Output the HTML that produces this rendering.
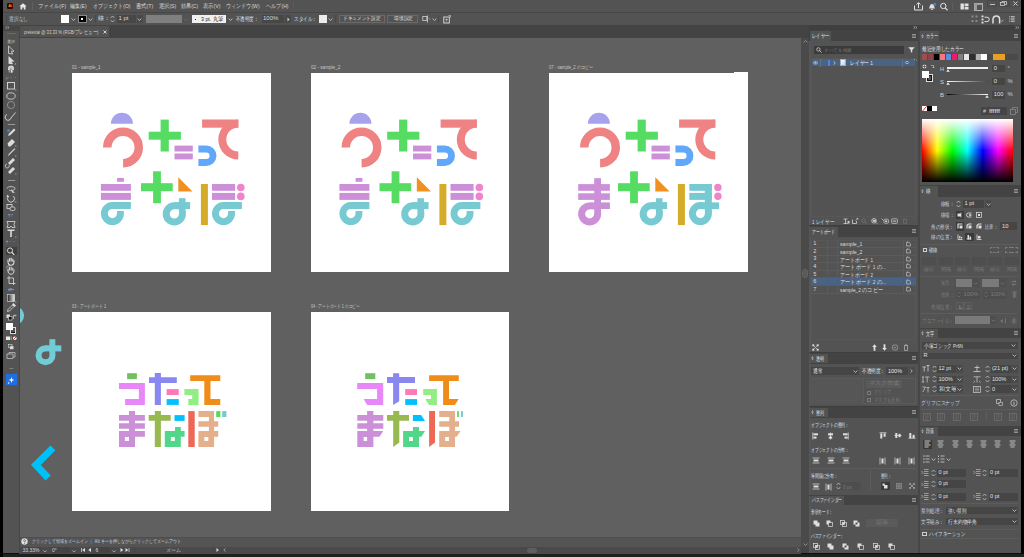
<!DOCTYPE html>
<html><head><meta charset="utf-8">
<style>
*{margin:0;padding:0;box-sizing:border-box}
html,body{width:1024px;height:557px;overflow:hidden;background:#0e0e0e}
body{font-family:"Liberation Sans",sans-serif;color:#d6d6d6;position:relative}
.a{position:absolute}
.t{position:absolute;white-space:nowrap;color:#cfcfcf}
svg.a{overflow:visible}
</style></head><body>

<div class="a" style="left:3px;top:0px;width:1018px;height:12.5px;background:#535353;"></div>
<div class="a" style="left:7px;top:2.8px;width:6.4px;height:6px;background:#330000;border-radius:1.2px"></div>
<div class="t" style="left:7px;top:2.8px;width:6.4px;font-size:4px;line-height:6px;text-align:center;color:#ff9a00;font-weight:bold">Ai</div>
<svg class="a" style="left:18.6px;top:2.8px" width="8" height="7" viewBox="0 0 8 7"><path d="M4,0.2L0.4,3.3H1.5V6.4H3.2V4.6H4.8V6.4H6.5V3.3H7.6Z" fill="#e6e6e6"/></svg>
<div class="a" style="left:31.5px;top:2px;width:0.6px;height:8px;background:#5e5e5e;"></div>
<svg class="a" style="left:38.2px;top:0.50px;overflow:visible" width="28.2" height="9.60"><text x="0" y="6.96" font-size="6" textLength="28.2" lengthAdjust="spacingAndGlyphs" fill="#d8d8d8" font-family="Liberation Sans">ファイル(F)</text></svg>
<svg class="a" style="left:70.4px;top:0.50px;overflow:visible" width="16.6" height="9.60"><text x="0" y="6.96" font-size="6" textLength="16.6" lengthAdjust="spacingAndGlyphs" fill="#d8d8d8" font-family="Liberation Sans">編集(E)</text></svg>
<svg class="a" style="left:93px;top:0.50px;overflow:visible" width="37.5" height="9.60"><text x="0" y="6.96" font-size="6" textLength="37.5" lengthAdjust="spacingAndGlyphs" fill="#d8d8d8" font-family="Liberation Sans">オブジェクト(O)</text></svg>
<svg class="a" style="left:136.1px;top:0.50px;overflow:visible" width="17.3" height="9.60"><text x="0" y="6.96" font-size="6" textLength="17.3" lengthAdjust="spacingAndGlyphs" fill="#d8d8d8" font-family="Liberation Sans">書式(T)</text></svg>
<svg class="a" style="left:158.7px;top:0.50px;overflow:visible" width="17.3" height="9.60"><text x="0" y="6.96" font-size="6" textLength="17.3" lengthAdjust="spacingAndGlyphs" fill="#d8d8d8" font-family="Liberation Sans">選択(S)</text></svg>
<svg class="a" style="left:181px;top:0.50px;overflow:visible" width="17.2" height="9.60"><text x="0" y="6.96" font-size="6" textLength="17.2" lengthAdjust="spacingAndGlyphs" fill="#d8d8d8" font-family="Liberation Sans">効果(C)</text></svg>
<svg class="a" style="left:203.2px;top:0.50px;overflow:visible" width="17.6" height="9.60"><text x="0" y="6.96" font-size="6" textLength="17.6" lengthAdjust="spacingAndGlyphs" fill="#d8d8d8" font-family="Liberation Sans">表示(V)</text></svg>
<svg class="a" style="left:226.4px;top:0.50px;overflow:visible" width="33.6" height="9.60"><text x="0" y="6.96" font-size="6" textLength="33.6" lengthAdjust="spacingAndGlyphs" fill="#d8d8d8" font-family="Liberation Sans">ウィンドウ(W)</text></svg>
<svg class="a" style="left:265.6px;top:0.50px;overflow:visible" width="22.6" height="9.60"><text x="0" y="6.96" font-size="6" textLength="22.6" lengthAdjust="spacingAndGlyphs" fill="#d8d8d8" font-family="Liberation Sans">ヘルプ(H)</text></svg>
<div class="a" style="left:292.5px;top:2px;width:0.6px;height:8px;background:#5a5a5a;"></div>
<svg class="a" style="left:913px;top:1.5px" width="11" height="9" viewBox="0 0 11 9"><path d="M1.5,3.5V8H9.5V3.5" fill="none" stroke="#e0e0e0" stroke-width="1"/><path d="M5.5,6V0.8M3.5,2.6L5.5,0.6L7.5,2.6" fill="none" stroke="#e0e0e0" stroke-width="1"/></svg>
<svg class="a" style="left:926.5px;top:1.5px" width="10" height="9" viewBox="0 0 10 9"><path d="M2,6.5C2.8,5.5 2.5,2 5,2C7.5,2 7.2,5.5 8,6.5Z" fill="#e0e0e0"/><rect x="4.2" y="7" width="1.6" height="1" fill="#e0e0e0"/><circle cx="7.6" cy="2.2" r="1.5" fill="#2d8ceb"/></svg>
<svg class="a" style="left:938.5px;top:1.5px" width="10" height="9" viewBox="0 0 10 9"><circle cx="4.3" cy="4" r="2.7" fill="none" stroke="#e0e0e0" stroke-width="1"/><path d="M6.3,6L8.6,8.3" stroke="#e0e0e0" stroke-width="1.2"/></svg>
<div class="a" style="left:952.3px;top:2px;width:0.6px;height:8px;background:#5e5e5e;"></div>
<svg class="a" style="left:960px;top:3px" width="9" height="7" viewBox="0 0 9 7"><rect x="0.5" y="0.5" width="3.4" height="6" fill="#e0e0e0"/><rect x="4.6" y="0.5" width="3.9" height="2.6" fill="#e0e0e0"/><rect x="4.6" y="3.8" width="3.9" height="2.7" fill="#e0e0e0"/></svg>
<svg class="a" style="left:973.5px;top:2.5px" width="9" height="8" viewBox="0 0 9 8"><rect x="0.5" y="0.5" width="8" height="7" fill="none" stroke="#bdbdbd" stroke-width="0.9"/><rect x="0.5" y="0.5" width="2.5" height="7" fill="#9a9a9a"/><rect x="0.5" y="0.5" width="8" height="1.6" fill="#9a9a9a"/></svg>
<div class="a" style="left:987.2px;top:0px;width:10.3px;height:7.2px;background:#535353;border:0.5px solid #4a4a4a"></div>
<div class="a" style="left:997.5px;top:0px;width:11.9px;height:7.2px;background:#535353;border:0.5px solid #4a4a4a"></div>
<div class="a" style="left:1009.4px;top:0px;width:11.1px;height:7.2px;background:#535353;border:0.5px solid #4a4a4a"></div>
<div class="a" style="left:990px;top:3.6px;width:4.5px;height:0.8px;background:#bdbdbd;"></div>
<svg class="a" style="left:1000px;top:1px" width="7" height="5" viewBox="0 0 7 5"><rect x="0.5" y="1.5" width="4" height="3" fill="none" stroke="#c8c8c8" stroke-width="0.8"/><path d="M2,1.5V0.5H6.5V3.5H4.5" fill="none" stroke="#c8c8c8" stroke-width="0.8"/></svg>
<svg class="a" style="left:1012.5px;top:1px" width="5" height="5" viewBox="0 0 5 5"><path d="M0.5,0.5L4.5,4.5M4.5,0.5L0.5,4.5" stroke="#d0d0d0" stroke-width="0.9"/></svg>
<div class="a" style="left:1020.8px;top:0px;width:3.2px;height:557px;background:#000000;"></div>
<div class="a" style="left:3px;top:12.5px;width:1017.6px;height:12.5px;background:#535353;"></div>
<div class="a" style="left:3px;top:12.1px;width:1017.6px;height:0.8px;background:#474747;"></div>
<div class="a" style="left:5.5px;top:15px;width:0.7px;height:8px;background:#474747;"></div>
<svg class="a" style="left:9px;top:14.20px;overflow:visible" width="19" height="9.60"><text x="0" y="6.96" font-size="6" textLength="19" lengthAdjust="spacingAndGlyphs" fill="#b8c0d0" font-family="Liberation Sans">選択なし</text></svg>
<div class="a" style="left:60.9px;top:15px;width:8.3px;height:8px;background:#ffffff;"></div>
<svg class="a" style="left:71px;top:17.5px" width="5" height="3" viewBox="0 0 5 3"><path d="M0.6,0.6L2.5,2.4L4.4,0.6" fill="none" stroke="#d0d0d0" stroke-width="0.8"/></svg>
<div class="a" style="left:78px;top:14.8px;width:8.6px;height:8.4px;background:#000;border:0.8px solid #8a8a8a"></div>
<div class="a" style="left:81.3px;top:18px;width:2px;height:2px;background:#fff;"></div>
<svg class="a" style="left:88px;top:17.5px" width="5" height="3" viewBox="0 0 5 3"><path d="M0.6,0.6L2.5,2.4L4.4,0.6" fill="none" stroke="#d0d0d0" stroke-width="0.8"/></svg>
<div class="a" style="left:95px;top:15px;width:0.6px;height:8px;background:#474747;"></div>
<div class="t" style="left:98px;top:15.10px;font-size:6px;line-height:7.80px;color:#d8e0f0;">線：</div>
<svg class="a" style="left:110px;top:15px" width="5" height="8" viewBox="0 0 5 8"><path d="M0.8,2.8L2.5,1L4.2,2.8M0.8,5.2L2.5,7L4.2,5.2" fill="none" stroke="#c8c8c8" stroke-width="0.8"/></svg>
<div class="a" style="left:116.8px;top:15px;width:19.1px;height:8px;background:#474747;"></div>
<div class="t" style="left:118.5px;top:15.10px;font-size:6px;line-height:7.80px;color:#d8d8d8;">1 pt</div>
<div class="a" style="left:136.5px;top:15px;width:6.5px;height:8px;background:#4a4a4a;"></div>
<svg class="a" style="left:137.2px;top:17.5px" width="5" height="3" viewBox="0 0 5 3"><path d="M0.6,0.6L2.5,2.4L4.4,0.6" fill="none" stroke="#d0d0d0" stroke-width="0.8"/></svg>
<div class="a" style="left:146px;top:15px;width:35.8px;height:8px;background:#7f7f7f;"></div>
<svg class="a" style="left:183px;top:17.5px" width="5" height="3" viewBox="0 0 5 3"><path d="M0.6,0.6L2.5,2.4L4.4,0.6" fill="none" stroke="#6a6a6a" stroke-width="0.8"/></svg>
<div class="a" style="left:191.7px;top:15px;width:34.3px;height:8px;background:#f0f0f0;"></div>
<div class="a" style="left:195px;top:18.8px;width:1px;height:1px;background:#333;"></div>
<svg class="a" style="left:201.1px;top:14.20px;overflow:visible" width="22.3" height="9.60"><text x="0" y="6.96" font-size="6" textLength="22.3" lengthAdjust="spacingAndGlyphs" fill="#222" font-family="Liberation Sans">3 pt. 丸筆</text></svg>
<svg class="a" style="left:227.5px;top:17.5px" width="5" height="3" viewBox="0 0 5 3"><path d="M0.6,0.6L2.5,2.4L4.4,0.6" fill="none" stroke="#d0d0d0" stroke-width="0.8"/></svg>
<svg class="a" style="left:235.7px;top:14.20px;overflow:visible" width="22.3" height="9.60"><text x="0" y="6.96" font-size="6" textLength="22.3" lengthAdjust="spacingAndGlyphs" fill="#d8e0f0" font-family="Liberation Sans">不透明度：</text></svg>
<div class="a" style="left:261.7px;top:15px;width:22.3px;height:8px;background:#474747;"></div>
<div class="t" style="left:263px;top:15.10px;font-size:6px;line-height:7.80px;color:#d8d8d8;">100%</div>
<div class="a" style="left:285px;top:15px;width:6px;height:8px;background:#4a4a4a;"></div>
<svg class="a" style="left:286.8px;top:16.8px" width="3" height="5" viewBox="0 0 3 5"><path d="M0.5,0.5L2.5,2.5L0.5,4.5Z" fill="#d0d0d0"/></svg>
<svg class="a" style="left:293.5px;top:14.20px;overflow:visible" width="22.5" height="9.60"><text x="0" y="6.96" font-size="6" textLength="22.5" lengthAdjust="spacingAndGlyphs" fill="#d8e0f0" font-family="Liberation Sans">スタイル：</text></svg>
<div class="a" style="left:318.8px;top:15px;width:8.2px;height:8px;background:#ececec;"></div>
<svg class="a" style="left:328.2px;top:17.5px" width="5" height="3" viewBox="0 0 5 3"><path d="M0.6,0.6L2.5,2.4L4.4,0.6" fill="none" stroke="#d0d0d0" stroke-width="0.8"/></svg>
<div class="a" style="left:334.5px;top:15px;width:0.6px;height:8px;background:#474747;"></div>
<div class="a" style="left:339px;top:14.6px;width:45.7px;height:8px;border:1px solid #6a6a6a;border-width:0.7px"></div>
<svg class="a" style="left:343.4px;top:14.44px;overflow:visible" width="37.4" height="8.32"><text x="0" y="6.03" font-size="5.2" textLength="37.4" lengthAdjust="spacingAndGlyphs" fill="#e0e0e0" font-family="Liberation Sans">ドキュメント設定</text></svg>
<div class="a" style="left:387.4px;top:14.6px;width:31.1px;height:8px;border:1px solid #6a6a6a;border-width:0.7px"></div>
<svg class="a" style="left:394px;top:14.44px;overflow:visible" width="19" height="8.32"><text x="0" y="6.03" font-size="5.2" textLength="19" lengthAdjust="spacingAndGlyphs" fill="#e0e0e0" font-family="Liberation Sans">環境設定</text></svg>
<svg class="a" style="left:422px;top:15px" width="9" height="8" viewBox="0 0 9 8"><rect x="0.8" y="1.5" width="4" height="4" fill="none" stroke="#d0d0d0" stroke-width="0.8"/><path d="M5.5,0.5V7.5" stroke="#d0d0d0" stroke-width="0.8"/><path d="M6.5,3L8,4.5" stroke="#d0d0d0" stroke-width="0.6"/></svg>
<svg class="a" style="left:431.5px;top:17.5px" width="5" height="3" viewBox="0 0 5 3"><path d="M0.6,0.6L2.5,2.4L4.4,0.6" fill="none" stroke="#d0d0d0" stroke-width="0.8"/></svg>
<div class="a" style="left:438px;top:15px;width:0.6px;height:8px;background:#474747;"></div>
<svg class="a" style="left:443px;top:14.5px" width="8" height="9" viewBox="0 0 8 9"><rect x="0.8" y="2" width="5.5" height="6" fill="none" stroke="#e0e0e0" stroke-width="0.9"/><path d="M3.6,6.5V3.8M2.4,5L3.6,3.8L4.8,5" fill="none" stroke="#e0e0e0" stroke-width="0.6"/><path d="M5.5,0.5H7.5V2.5" fill="none" stroke="#e0e0e0" stroke-width="0.6"/></svg>
<svg class="a" style="left:971px;top:15px" width="7" height="8" viewBox="0 0 7 8"><g fill="#8a8a8a"><rect x="0.5" y="0.5" width="2" height="2"/><rect x="4.5" y="0.5" width="2" height="2"/><rect x="0.5" y="5" width="2" height="2"/><rect x="4.5" y="5" width="2" height="2"/></g></svg>
<svg class="a" style="left:981px;top:14.5px" width="9" height="9" viewBox="0 0 9 9"><g fill="#e0e0e0"><rect x="0.5" y="0.5" width="2" height="1.8"/><rect x="0.5" y="3.6" width="2" height="1.8"/><rect x="0.5" y="6.7" width="2" height="1.8"/></g><path d="M3.5,2.2H6A2.2,2.2 0 0 1 6,6.6H3.5" fill="none" stroke="#e0e0e0" stroke-width="1"/></svg>
<svg class="a" style="left:991.5px;top:14.5px" width="12" height="9" viewBox="0 0 12 9"><path d="M1,8.5V4.2A3.3,3.3 0 0 1 7.6,4.2V8.5" fill="none" stroke="#e0e0e0" stroke-width="1.5"/><path d="M8.8,5.6L9.8,6.6L11.3,4.8" fill="none" stroke="#d0d0d0" stroke-width="0.7"/></svg>
<svg class="a" style="left:1008.5px;top:16px" width="6" height="6" viewBox="0 0 6 6"><g fill="#d8d8d8"><rect x="0.3" y="0.3" width="1" height="1"/><rect x="0.3" y="2.5" width="1" height="1"/><rect x="0.3" y="4.7" width="1" height="1"/><rect x="2" y="0.3" width="3.7" height="1"/><rect x="2" y="2.5" width="3.7" height="1"/><rect x="2" y="4.7" width="3.7" height="1"/></g></svg>
<div class="a" style="left:3px;top:25px;width:805.5px;height:12.5px;background:#434343;"></div>
<div class="a" style="left:19.7px;top:25.8px;width:89.8px;height:11.7px;background:#535353;"></div>
<svg class="a" style="left:23.5px;top:27.12px;overflow:visible" width="74.5" height="8.96"><text x="0" y="6.50" font-size="5.6" textLength="74.5" lengthAdjust="spacingAndGlyphs" fill="#d0d0d0" font-family="Liberation Sans">pretextai @ 33.33 % (RGB/プレビュー)</text></svg>
<svg class="a" style="left:103.3px;top:29.8px" width="4" height="4" viewBox="0 0 4 4"><path d="M0.5,0.5L3.5,3.5M3.5,0.5L0.5,3.5" stroke="#e0e0e0" stroke-width="0.9"/></svg>
<div class="a" style="left:19.7px;top:37.5px;width:781.7px;height:499.3px;background:#606060;"></div>
<div class="a" style="left:801.4px;top:37.5px;width:7.2px;height:509.5px;background:#4a4a4a;"></div>
<svg class="a" style="left:802.7px;top:39.5px" width="5" height="3" viewBox="0 0 5 3"><path d="M0.6,2.4L2.5,0.6L4.4,2.4" fill="none" stroke="#aaaaaa" stroke-width="0.7"/></svg>
<svg class="a" style="left:802.7px;top:542.5px" width="5" height="3" viewBox="0 0 5 3"><path d="M0.6,0.6L2.5,2.4L4.4,0.6" fill="none" stroke="#aaaaaa" stroke-width="0.7"/></svg>
<div class="a" style="left:802px;top:268.5px;width:5.6px;height:9.8px;background:#5a5a5a;border-radius:2.8px;border:0.5px solid #646464"></div>
<div class="a" style="left:19.7px;top:536.8px;width:781.7px;height:10.2px;background:#545454;"></div>
<div class="a" style="left:19.7px;top:536.8px;width:781.7px;height:0.9px;background:#4e4e4e;"></div>
<svg class="a" style="left:21.4px;top:538.3px" width="7" height="7" viewBox="0 0 7 7"><circle cx="3.5" cy="3.5" r="3.2" fill="#dcdcdc"/><path d="M2.5,2.7A1,1 0 1 1 3.5,3.7V4.3" fill="none" stroke="#555" stroke-width="0.8"/><rect x="3.1" y="4.9" width="0.8" height="0.8" fill="#555"/></svg>
<svg class="a" style="left:32px;top:537.18px;overflow:visible" width="149" height="8.64"><text x="0" y="6.26" font-size="5.4" textLength="149" lengthAdjust="spacingAndGlyphs" fill="#c8d0e0" font-family="Liberation Sans">クリックして領域をズームイン ｜ Alt キーを押しながらクリックしてズームアウト</text></svg>
<div class="a" style="left:19.7px;top:547px;width:781.7px;height:6.6px;background:#4a4a4a;"></div>
<div class="a" style="left:801.4px;top:547px;width:7.2px;height:6.3px;background:#454545;"></div>
<div class="a" style="left:21.5px;top:547.3px;width:19.5px;height:6px;background:#444;"></div>
<div class="t" style="left:22.5px;top:547.15px;font-size:5px;line-height:6.50px;color:#d0d8e8;">33.33%</div>
<svg class="a" style="left:43px;top:549.5px" width="4" height="3" viewBox="0 0 4 3"><path d="M0.4,0.5L2,2L3.6,0.5" fill="none" stroke="#c8c8c8" stroke-width="0.7"/></svg>
<div class="a" style="left:50.7px;top:547.3px;width:19.8px;height:6px;background:#444;"></div>
<div class="t" style="left:52px;top:547.15px;font-size:5px;line-height:6.50px;color:#d0d8e8;">0°</div>
<svg class="a" style="left:72px;top:549.5px" width="4" height="3" viewBox="0 0 4 3"><path d="M0.4,0.5L2,2L3.6,0.5" fill="none" stroke="#c8c8c8" stroke-width="0.7"/></svg>
<svg class="a" style="left:80.5px;top:548.3px" width="12" height="4" viewBox="0 0 12 4"><path d="M0.5,0V4" stroke="#ddd" stroke-width="0.7"/><path d="M4,0L1.2,2L4,4Z M10,0L7.2,2L10,4Z" fill="#ddd"/></svg>
<div class="a" style="left:94.3px;top:547.3px;width:16.2px;height:6px;background:#444;"></div>
<div class="t" style="left:95.5px;top:547.35px;font-size:5px;line-height:6.50px;color:#d0d8e8;">6</div>
<svg class="a" style="left:112px;top:549.5px" width="4" height="3" viewBox="0 0 4 3"><path d="M0.4,0.5L2,2L3.6,0.5" fill="none" stroke="#c8c8c8" stroke-width="0.7"/></svg>
<svg class="a" style="left:120px;top:548.3px" width="11" height="4" viewBox="0 0 11 4"><path d="M0.5,0L3.3,2L0.5,4Z M5.5,0L8.3,2L5.5,4Z" fill="#ddd"/><path d="M9,0V4" stroke="#ddd" stroke-width="0.7"/></svg>
<div class="a" style="left:134px;top:547.3px;width:0.6px;height:6px;background:#444;"></div>
<div class="t" style="left:153.9px;top:547.15px;width:40px;text-align:center;font-size:5.3px;line-height:6.89px;color:#c8c8c8;">ズーム</div>
<div class="a" style="left:213px;top:547.3px;width:0.6px;height:6px;background:#444;"></div>
<svg class="a" style="left:215.5px;top:548.3px" width="3" height="4" viewBox="0 0 3 4"><path d="M0.5,0L2.8,2L0.5,4Z" fill="#ddd"/></svg>
<div class="a" style="left:221px;top:547.3px;width:0.6px;height:6px;background:#444;"></div>
<svg class="a" style="left:223px;top:548.3px" width="3" height="4" viewBox="0 0 3 4"><path d="M2.5,0.3L0.8,2L2.5,3.7" fill="none" stroke="#bbb" stroke-width="0.7"/></svg>
<div class="a" style="left:527px;top:547.8px;width:9.7px;height:5.4px;background:#5e5e5e;border-radius:2.7px"></div>
<svg class="a" style="left:796.5px;top:548.3px" width="3" height="4" viewBox="0 0 3 4"><path d="M0.5,0.3L2.2,2L0.5,3.7" fill="none" stroke="#aaa" stroke-width="0.7"/></svg>
<div class="a" style="left:0px;top:553.5px;width:1024px;height:3.5px;background:#202020;"></div>
<div class="a" style="left:0px;top:0px;width:3.1px;height:557px;background:#000000;"></div>
<div class="a" style="left:71.6px;top:72.8px;width:199.0px;height:199.3px;background:#fff;"></div>
<div class="a" style="left:310.5px;top:72.8px;width:198.7px;height:199.3px;background:#fff;"></div>
<div class="a" style="left:549.1px;top:72.8px;width:198.5px;height:199.3px;background:#fff;"></div>
<div class="a" style="left:72.1px;top:311.9px;width:198.5px;height:199.2px;background:#fff;"></div>
<div class="a" style="left:310.5px;top:311.9px;width:198.7px;height:199.2px;background:#fff;"></div>
<div class="a" style="left:733.7px;top:72.25px;width:14px;height:0.8px;background:#fff;"></div>
<svg class="a" style="left:71.8px;top:63.30px;overflow:visible" width="28.4" height="8.00"><text x="0" y="5.80" font-size="5" textLength="28.4" lengthAdjust="spacingAndGlyphs" fill="#c8c8c8" font-family="Liberation Sans">01 - sample_1</text></svg>
<svg class="a" style="left:310.9px;top:63.30px;overflow:visible" width="29.3" height="8.00"><text x="0" y="5.80" font-size="5" textLength="29.3" lengthAdjust="spacingAndGlyphs" fill="#c8c8c8" font-family="Liberation Sans">02 - sample_2</text></svg>
<svg class="a" style="left:549.2px;top:63.20px;overflow:visible" width="44.7" height="8.00"><text x="0" y="5.80" font-size="5" textLength="44.7" lengthAdjust="spacingAndGlyphs" fill="#c8c8c8" font-family="Liberation Sans">07 - sample_2 のコピー</text></svg>
<svg class="a" style="left:71.9px;top:301.90px;overflow:visible" width="34.2" height="8.00"><text x="0" y="5.80" font-size="5" textLength="34.2" lengthAdjust="spacingAndGlyphs" fill="#c8c8c8" font-family="Liberation Sans">03 - アートボード 1</text></svg>
<svg class="a" style="left:310.9px;top:301.70px;overflow:visible" width="48.9" height="8.00"><text x="0" y="5.80" font-size="5" textLength="48.9" lengthAdjust="spacingAndGlyphs" fill="#c8c8c8" font-family="Liberation Sans">04 - アートボード 1 のコピー</text></svg>
<svg class="a" style="left:0;top:0;overflow:hidden" width="1024" height="557" viewBox="0 0 1024 557">
<defs>
<clipPath id="cv"><rect x="19.7" y="37.5" width="781.7" height="499.3"/></clipPath>
<g id="row1">
  <path d="M110.9,123.8A11,11 0 0 1 132.9,123.8Z" fill="#a6a2ec"/>
  <path d="M107.25,147.5A15.75,15.75 0 1 1 123.1,163.25" fill="none" stroke="#ef8282" stroke-width="8.5"/>
  <rect x="160.6" y="119.6" width="8.2" height="31.9" fill="#56dc62"/>
  <rect x="148.7" y="131.7" width="32.2" height="8" fill="#56dc62"/>
  <rect x="174.5" y="145.6" width="18.3" height="5.9" fill="#cc90d8"/>
  <rect x="174.5" y="153.5" width="18.3" height="5.9" fill="#cc90d8"/>
  <path d="M198.4,148.95H206.25A6.75,6.75 0 0 1 206.25,162.45H198.4" fill="none" stroke="#62a8fa" stroke-width="6.9"/>
  <rect x="202.1" y="119.5" width="36.2" height="8.2" fill="#ef8282"/>
  <path d="M238.3,119.6A20,20 0 0 0 238.3,159.6V151.6A12,12 0 0 1 238.3,127.6Z" fill="#ef8282"/>
</g>
<g id="row2common">
  <rect x="153.1" y="171.3" width="7.8" height="31.9" fill="#56dc62"/>
  <rect x="141" y="183.2" width="31.7" height="8" fill="#56dc62"/>
  <path d="M178.3,177.3L178.3,191.5L192.5,191.5Z" fill="#f09020"/>
  <circle cx="174.3" cy="213.9" r="8.1" fill="none" stroke="#78cad2" stroke-width="7"/>
  <rect x="178.9" y="198.2" width="6.6" height="15.7" fill="#78cad2"/>
  <rect x="174.3" y="202.1" width="15.8" height="6.9" fill="#78cad2"/>
  <rect x="174.3" y="209.3" width="4.6" height="4.6" fill="#fff"/>
  <rect x="200.9" y="184" width="7" height="41.1" fill="#d4ac2a"/>
</g>
<g id="mabo1">
  <rect x="117.1" y="177.9" width="6.8" height="3.9" fill="#cc90d8"/>
  <rect x="100.9" y="184" width="30" height="6.8" fill="#cc90d8"/>
  <rect x="100.9" y="192.9" width="30" height="7" fill="#cc90d8"/>
  <path d="M130.9,205.55H112.4A8.05,8.05 0 1 0 120.45,213.6V210.9" fill="none" stroke="#78cad2" stroke-width="6.9"/>
  <rect x="212" y="184" width="23.1" height="6.8" fill="#cc90d8"/>
  <rect x="212" y="192.9" width="23.1" height="7" fill="#cc90d8"/>
  <circle cx="240.8" cy="187.5" r="3.8" fill="#f084cc"/>
  <circle cx="240.8" cy="196.4" r="3.8" fill="#f084cc"/>
  <path d="M241.9,205.55H223.5A8.05,8.05 0 1 0 231.55,213.6V210.9" fill="none" stroke="#78cad2" stroke-width="6.9"/>
</g>
</defs>
<g clip-path="url(#cv)">
  <use href="#row1"/><use href="#row2common"/><use href="#mabo1"/>
  <g transform="translate(238.5,0)"><use href="#row1"/><use href="#row2common"/><use href="#mabo1"/></g>
  <g transform="translate(477,0)"><use href="#row1"/><use href="#row2common"/></g>
  <g fill="#cc90d8">
    <rect x="594.2" y="178.2" width="6.8" height="35.7"/>
    <rect x="578.2" y="184.1" width="31.7" height="6.7"/>
    <rect x="578.2" y="193.3" width="31.7" height="6.6"/>
    <rect x="589.6" y="202.4" width="20.3" height="6.6"/>
  </g>
  <circle cx="589.65" cy="213.9" r="8" fill="none" stroke="#cc90d8" stroke-width="7"/>
  <rect x="589.65" y="209.4" width="4.55" height="4.5" fill="#fff"/>
  <g fill="#78cad2">
    <rect x="689.3" y="184" width="22.5" height="6.8"/>
    <rect x="689.3" y="192.9" width="22.5" height="7"/>
    <rect x="704.8" y="184" width="7" height="29.6"/>
    <rect x="700.4" y="202.4" width="18.7" height="6.7"/>
  </g>
  <circle cx="700.4" cy="213.6" r="8" fill="none" stroke="#78cad2" stroke-width="7"/>
  <rect x="700.4" y="209.1" width="4.4" height="4.5" fill="#fff"/>
  <circle cx="717.9" cy="187.4" r="3.7" fill="#f084cc"/>
  <circle cx="717.9" cy="196.3" r="3.7" fill="#f084cc"/>

  <!-- A4 pixel style -->
  <rect x="127.1" y="373.2" width="9.8" height="5.9" fill="#72c062"/>
  <path fill="#e888f8" d="M119,383.1H144.9V389H119Z M138.9,383.1H144.9V405H138.9Z M125.1,399H144.9V405H125.1Z"/>
  <path fill="#8888f0" d="M154.8,373.1H160.9V404.9H154.8Z M149,377.2H176.8V383H149Z"/>
  <rect x="166.6" y="389.1" width="12.15" height="5.9" fill="#ff78b8"/>
  <rect x="166.6" y="399.1" width="12.15" height="5.8" fill="#00c0ff"/>
  <path fill="#92ee82" d="M184.4,389.1H198.6V395H184.4Z M192.2,389.1H198.6V404.9H192.2Z M188.3,399.1H198.6V404.9H188.3Z"/>
  <path fill="#f08c18" d="M190.2,375.2H220.3V381.1H190.2Z M204.3,375.2H210.5V404.9H204.3Z M204.3,399.1H220.3V404.9H204.3Z"/>
  <path fill="#cc90d8" d="M129,411.1H135V447H129Z M119,415.1H144.9V420.7H119Z M119,423.2H144.9V428.8H119Z M119,431.1H144.9V436.7H119Z M119,431.1H135V447H119Z M124.9,437.1V441H129V437.1Z"/>
  <path fill="#98b850" d="M154.8,411.1H160.9V447H154.8Z M148.7,415.1H170.7V420.7H148.7Z"/>
  <rect x="174.5" y="415.1" width="10.1" height="5.8" fill="#00c0ff"/>
  <path fill="#52d68a" d="M164.8,431H180.8V447H164.8Z M170.9,437.1V441H174.8V437.1Z M175,427H180.8V431.1H175Z M180.7,431H184.6V436.8H180.7Z"/>
  <rect x="188.3" y="411.1" width="6.4" height="35.9" fill="#ee6858"/>
  <path fill="#e4b08c" d="M198.4,411.1H214.1V417.1H198.4Z M208.9,411.1H214.1V447H208.9Z M198.4,421.2H218.2V426.8H198.4Z M198.4,431H218.2V436.8H198.4Z M198.4,431H214.1V447H198.4Z M204.4,437.1V441H208.3V437.1Z"/>
  <rect x="216.2" y="411.1" width="4.2" height="5.9" fill="#50dd58"/>
  <rect x="222.2" y="411.1" width="4.2" height="5.9" fill="#78c8d0"/>

  <!-- A5 slanted -->
  <rect x="365.2" y="373.2" width="10.1" height="5.9" fill="#72c062"/>
  <path fill="#e888f8" d="M357.2,383.1H383.2V389H357.2Z M377.1,383.1H383.2V405H377.1Z M363.6,399H383.2V405H367.2Z"/>
  <path fill="#8888f0" d="M387,377H415V383.1H387Z M393.1,373.2H399.2V401.2L393.1,404.9Z"/>
  <rect x="405.2" y="389.1" width="11.8" height="5.9" fill="#ff78b8"/>
  <rect x="405.2" y="399.1" width="11.8" height="5.8" fill="#00c0ff"/>
  <path fill="#92ee82" d="M423.2,389.1H436.9V395H423.2Z M431,389.1H436.9V404.9H431Z M425.2,399.1H436.9V404.9H429.1Z"/>
  <path fill="#f08c18" d="M429.1,375.2H458.75V381.1H429.1Z M443.1,375.2H449V404.9H443.1Z M443.1,399.1H458.75L454.8,404.9H443.1Z"/>
  <path fill="#cc90d8" d="M367.1,411.1H373.4V447H367.1Z M357.3,415.1H383.3V420.7H357.3Z M357.3,423.2H383.3V428.8H357.3Z M357.3,431.1H383.3L379.5,436.7H357.3Z M357.3,431.1H373.4V447H357.3Z M363.6,437.1V441H367.2V437.1Z"/>
  <path fill="#98b850" d="M387,415.1H409V420.7H387Z M393.2,411.1H399.3V442.6L393.2,447Z"/>
  <path d="M412.9,415.1H421.2L425,420.9H412.9Z" fill="#00c0ff"/>
  <path fill="#52d68a" d="M403.1,431H419V447H403.1Z M409,437.1V441H412.9V437.1Z M412.9,427H419V431.1H412.9Z M418.9,431H425L421.4,436.8H418.9Z"/>
  <path d="M429.1,411.1H435V442.6L429.1,447Z" fill="#ee6858"/>
  <path fill="#e4b08c" d="M439.2,411.1H455V417.1H439.2Z M449.3,411.1H455V447H449.3Z M439.2,421.2H459V426.8H439.2Z M439.2,431H460.6L456.6,436.8H439.2Z M439.2,431H455V447H439.2Z M445.1,437.1V441H448.9V437.1Z"/>
  <rect x="457.1" y="411.1" width="1.7" height="5.9" fill="#50dd58"/>
  <rect x="461" y="411.1" width="1.9" height="5.9" fill="#78c8d0"/>

  <!-- off-artboard shapes -->
  <circle cx="15" cy="315.6" r="9.1" fill="#72ccd6"/>
  <circle cx="45.5" cy="355.3" r="6.95" fill="none" stroke="#72ccd6" stroke-width="6.1"/>
  <rect x="49.4" y="339.2" width="5.9" height="16.1" fill="#72ccd6"/>
  <rect x="45.5" y="345.4" width="15.8" height="6" fill="#72ccd6"/>
  <rect x="45.5" y="351.4" width="3.9" height="3.9" fill="#606060"/>
  <path d="M50.5,445.4L55.3,450.3L40.9,465.1L50.75,475.5L45.55,480.4L31,464.75Z" fill="#00c0f8"/>
</g>
</svg>

<div class="a" style="left:3.1px;top:25px;width:16.6px;height:528.3px;background:#535353;"></div>
<div class="a" style="left:3.1px;top:25px;width:16.6px;height:5.5px;background:#474747;"></div>
<div class="a" style="left:18.9px;top:30.5px;width:0.8px;height:523px;background:#464646;"></div>
<svg class="a" style="left:5px;top:26.3px" width="5" height="3" viewBox="0 0 5 3"><path d="M0.5,0.3L2,1.5L0.5,2.7M2.5,0.3L4,1.5L2.5,2.7" fill="none" stroke="#d0d0d0" stroke-width="0.6"/></svg>
<div class="a" style="left:6.5px;top:32.5px;width:9.5px;height:0.6px;background:#6a6a6a;"></div>
<div class="t" style="left:3.4000000000000004px;top:39.40px;width:16px;text-align:center;font-size:4px;line-height:5.20px;color:#c8c8c8;">選択</div>
<svg class="a" style="left:5.4px;top:45.0px" width="12" height="10" viewBox="0 0 12 10"><path d="M3.5,1L9,6.2L6.2,6.5L7.8,9L3.5,8.5Z" fill="none" stroke="#dcdcdc" stroke-width="0.8"/></svg>
<svg class="a" style="left:5.4px;top:54.5px" width="12" height="10" viewBox="0 0 12 10"><path d="M3.5,1L9.5,6.5L6.5,6.8L8.2,9.3L3.5,8.7Z" fill="#dcdcdc"/><rect x="10" y="8.5" width="1" height="1" fill="#bbb"/></svg>
<svg class="a" style="left:5.4px;top:64.0px" width="12" height="10" viewBox="0 0 12 10"><path d="M3,4A3,2.5 0 0 1 9,4V6H3Z" fill="#cfcfcf"/><path d="M5.5,4.5L9,7.5L7.3,7.7L8,9.3L5.5,8.8Z" fill="#eeeeee" stroke="#535353" stroke-width="0.5"/><path d="M4.2,6V8.5" stroke="#cfcfcf" stroke-width="0.8"/></svg>
<div class="t" style="left:3.4000000000000004px;top:75.40px;width:16px;text-align:center;font-size:4px;line-height:5.20px;color:#c8c8c8;">シ・・</div>
<svg class="a" style="left:5.4px;top:81.0px" width="12" height="10" viewBox="0 0 12 10"><rect x="2.5" y="1.5" width="7" height="6.5" fill="none" stroke="#dcdcdc" stroke-width="0.9"/><rect x="10.3" y="8.5" width="1" height="1" fill="#bbb"/></svg>
<svg class="a" style="left:5.4px;top:91.2px" width="12" height="10" viewBox="0 0 12 10"><ellipse cx="6" cy="5" rx="4.2" ry="3.2" fill="none" stroke="#dcdcdc" stroke-width="0.8"/></svg>
<svg class="a" style="left:5.4px;top:100.0px" width="12" height="10" viewBox="0 0 12 10"><circle cx="6" cy="5" r="3.6" fill="none" stroke="#9a9a9a" stroke-width="0.8"/></svg>
<svg class="a" style="left:5.4px;top:110.0px" width="12" height="10" viewBox="0 0 12 10"><path d="M2,4.5A3,3 0 1 0 6,8L10.5,2.5" fill="none" stroke="#dcdcdc" stroke-width="0.9"/></svg>
<div class="t" style="left:3.4000000000000004px;top:122.22px;width:16px;text-align:center;font-size:3.5px;line-height:4.55px;color:#9a9a9a;">▬▬</div>
<div class="a" style="left:7px;top:129px;width:3px;height:3px;border-radius:50%;background:#2d8ceb"></div>
<svg class="a" style="left:5.4px;top:127.4px" width="12" height="10" viewBox="0 0 12 10"><path d="M3,9L4,6.5L9,1.5L10.5,3L5.5,8Z" fill="#dcdcdc"/></svg>
<svg class="a" style="left:5.4px;top:136.7px" width="12" height="10" viewBox="0 0 12 10"><path d="M2.5,6.5L7,2L10,5L5.5,9.5H3.5Z" fill="#dcdcdc"/><rect x="10.3" y="8.5" width="1" height="1" fill="#bbb"/></svg>
<svg class="a" style="left:5.4px;top:146.8px" width="12" height="10" viewBox="0 0 12 10"><path d="M2.8,9.2L3.8,7L9.5,1.2L10.3,2L4.6,7.8Z" fill="#dcdcdc"/><rect x="10.3" y="8.5" width="1" height="1" fill="#bbb"/></svg>
<svg class="a" style="left:5.4px;top:156.0px" width="12" height="10" viewBox="0 0 12 10"><path d="M3,7L8,2L10,4L5,9Z" fill="#dcdcdc"/><path d="M2,8A2,2 0 1 0 4,9" fill="none" stroke="#dcdcdc" stroke-width="0.7"/></svg>
<svg class="a" style="left:5.4px;top:165.4px" width="12" height="10" viewBox="0 0 12 10"><path d="M3,7L8,2L10,4L5,9Z" fill="#dcdcdc"/><rect x="10.3" y="8.5" width="1" height="1" fill="#bbb"/></svg>
<div class="t" style="left:3.4000000000000004px;top:177.72px;width:16px;text-align:center;font-size:3.5px;line-height:4.55px;color:#9a9a9a;">▬▬</div>
<svg class="a" style="left:5.4px;top:183.7px" width="12" height="10" viewBox="0 0 12 10"><path d="M2,4.5C2,2 10,2 10,4.5C10,6.5 5,7 4,6" fill="none" stroke="#dcdcdc" stroke-width="0.8"/><path d="M6,5L10,9L7,8.5Z" fill="#dcdcdc"/></svg>
<svg class="a" style="left:5.4px;top:192.6px" width="12" height="10" viewBox="0 0 12 10"><path d="M8.5,3.2A3.5,3.5 0 1 1 3.5,3.2" fill="none" stroke="#dcdcdc" stroke-width="0.9"/><path d="M2.5,1.5L4,3.8L1.5,4Z" fill="#dcdcdc"/><rect x="10.3" y="8.5" width="1" height="1" fill="#bbb"/></svg>
<svg class="a" style="left:5.4px;top:202.4px" width="12" height="10" viewBox="0 0 12 10"><rect x="2" y="2.5" width="5" height="4" fill="none" stroke="#dcdcdc" stroke-width="0.8"/><rect x="5" y="5" width="5" height="3.5" rx="1.5" fill="#535353" stroke="#dcdcdc" stroke-width="0.8"/></svg>
<div class="t" style="left:3.4000000000000004px;top:214.42px;width:16px;text-align:center;font-size:3.5px;line-height:4.55px;color:#9aa0c0;">ﾜﾌﾟ</div>
<svg class="a" style="left:5.4px;top:219.3px" width="12" height="10" viewBox="0 0 12 10"><path d="M2,2.5H10L9,5.5L10,8.5H7L6,7L5,8.5H2L3,5.5Z" fill="none" stroke="#dcdcdc" stroke-width="0.8"/></svg>
<svg class="a" style="left:5.4px;top:228.3px" width="12" height="10" viewBox="0 0 12 10"><path d="M2.5,1.5H9.5V3H6.8V9H5.2V3H2.5Z" fill="#dcdcdc"/><rect x="10.3" y="8.5" width="1" height="1" fill="#bbb"/></svg>
<div class="t" style="left:3.4000000000000004px;top:240.22px;width:16px;text-align:center;font-size:3.5px;line-height:4.55px;color:#9aa0c0;">ﾅ・・</div>
<div class="a" style="left:6.2px;top:247.2px;width:10.6px;height:8.3px;background:#3f3f3f;"></div>
<svg class="a" style="left:5.4px;top:246.3px" width="12" height="10" viewBox="0 0 12 10"><circle cx="5" cy="4.5" r="2.6" fill="none" stroke="#e8e8e8" stroke-width="0.9"/><path d="M7,6.5L9.3,8.8" stroke="#e8e8e8" stroke-width="1.1"/></svg>
<svg class="a" style="left:5.4px;top:256.4px" width="12" height="10" viewBox="0 0 12 10"><path d="M3,6V3.5M4.6,5.5V2M6.2,5.5V1.8M7.8,5.8V2.8M3,5.5C3,8 4,9.2 6,9.2C8,9.2 9,8 9,5.5V4.5" fill="none" stroke="#dcdcdc" stroke-width="1.1"/></svg>
<svg class="a" style="left:5.4px;top:265.4px" width="12" height="10" viewBox="0 0 12 10"><path d="M3,6V3.5M4.6,5.5V2M6.2,5.5V1.8M7.8,5.8V2.8M3,5.5C3,8 4,9.2 6,9.2C8,9.2 9,8 9,5.5V4.5" fill="none" stroke="#dcdcdc" stroke-width="1"/><path d="M1,2.5A5,5 0 0 1 5,0.8" fill="none" stroke="#dcdcdc" stroke-width="0.6"/></svg>
<svg class="a" style="left:5.4px;top:275.0px" width="12" height="10" viewBox="0 0 12 10"><path d="M4,1V8.5H10.5M2,3H8.5V10" fill="none" stroke="#dcdcdc" stroke-width="0.8"/></svg>
<div class="t" style="left:3.4000000000000004px;top:287.53px;width:16px;text-align:center;font-size:3.5px;line-height:4.55px;color:#9aa0c0;">ｶﾗｰ</div>
<svg class="a" style="left:5.4px;top:292.6px" width="12" height="10" viewBox="0 0 12 10"><defs><linearGradient id="gtg"><stop offset="0" stop-color="#222"/><stop offset="1" stop-color="#eee"/></linearGradient></defs><rect x="2.5" y="1.5" width="7" height="7" fill="url(#gtg)" stroke="#dcdcdc" stroke-width="0.6"/><rect x="10.3" y="8.5" width="1" height="1" fill="#bbb"/></svg>
<svg class="a" style="left:5.4px;top:302.4px" width="12" height="10" viewBox="0 0 12 10"><path d="M2.5,9.5L3,7.5L7.5,3L9,4.5L4.5,9Z" fill="none" stroke="#dcdcdc" stroke-width="0.8"/><path d="M7,2.5L8.5,1L11,3.5L9.5,5Z" fill="#dcdcdc"/></svg>
<svg class="a" style="left:5.4px;top:313.3px" width="12" height="9" viewBox="0 0 12 9"><rect x="1.5" y="1.5" width="3.5" height="3.5" fill="#dcdcdc"/><rect x="3.5" y="3.5" width="3.5" height="3.5" fill="#111" stroke="#dcdcdc" stroke-width="0.6"/><path d="M8.5,6V2.5H10.8M10,1.5L11,2.5L10,3.5" fill="none" stroke="#dcdcdc" stroke-width="0.7"/></svg>
<div class="a" style="left:9.5px;top:326.5px;width:6.5px;height:7px;background:#111;border:1px solid #dcdcdc"></div>
<div class="a" style="left:10.9px;top:327.9px;width:3.7px;height:4.2px;background:#535353;"></div>
<div class="a" style="left:5.5px;top:322.5px;width:7px;height:7.5px;background:#ffffff;"></div>
<svg class="a" style="left:5.4px;top:335.0px" width="12" height="7" viewBox="0 0 12 7"><rect x="1" y="1.5" width="4" height="3.5" fill="#eee"/><rect x="5.5" y="1.5" width="1.3" height="3.5" fill="#999"/><circle cx="9.8" cy="3.2" r="1.8" fill="#fff"/><path d="M8.5,4.6L11.2,1.8" stroke="#e02020" stroke-width="0.9"/></svg>
<svg class="a" style="left:5.4px;top:342.5px" width="12" height="8" viewBox="0 0 12 8"><rect x="3.5" y="1.5" width="3.5" height="3" fill="none" stroke="#dcdcdc" stroke-width="0.6"/><rect x="5" y="3.2" width="3.5" height="3" fill="#dcdcdc"/></svg>
<svg class="a" style="left:5.4px;top:351.0px" width="12" height="9" viewBox="0 0 12 9"><rect x="2" y="3" width="6" height="4.5" fill="none" stroke="#cfcfcf" stroke-width="0.7"/><path d="M4,3V1.5H10V6H8" fill="none" stroke="#cfcfcf" stroke-width="0.7"/></svg>
<div class="t" style="left:3.4000000000000004px;top:366.20px;width:16px;text-align:center;font-size:4px;line-height:5.20px;color:#9a9a9a;">•••</div>
<div class="a" style="left:5.6px;top:374.3px;width:11.2px;height:10.9px;background:#1f6fe0;"></div>
<svg class="a" style="left:5.4px;top:374.7px" width="12" height="10" viewBox="0 0 12 10"><path d="M6.5,2L7.2,4.2L9.4,5L7.2,5.8L6.5,8L5.8,5.8L3.6,5L5.8,4.2Z" fill="#fff"/><circle cx="3.6" cy="8" r="0.8" fill="#fff"/></svg>
<div class="a" style="left:808.6px;top:25px;width:212px;height:528.3px;background:#535353;"></div>
<div class="a" style="left:808.6px;top:25px;width:0.8px;height:528.3px;background:#3a3a3a;"></div>
<div class="a" style="left:809.4px;top:41px;width:1.8px;height:512px;background:#575757;"></div>
<div class="a" style="left:808.6px;top:25px;width:212px;height:5.5px;background:#3f3f3f;"></div>
<svg class="a" style="left:912.5px;top:26.3px" width="5" height="3" viewBox="0 0 5 3"><path d="M0.5,0.3L2,1.5L0.5,2.7M2.5,0.3L4,1.5L2.5,2.7" fill="none" stroke="#d0d0d0" stroke-width="0.6"/></svg>
<svg class="a" style="left:1014.5px;top:26.3px" width="5" height="3" viewBox="0 0 5 3"><path d="M0.5,0.3L2,1.5L0.5,2.7M2.5,0.3L4,1.5L2.5,2.7" fill="none" stroke="#d0d0d0" stroke-width="0.6"/></svg>
<div class="a" style="left:917.8px;top:30.5px;width:1.9px;height:522.8px;background:#474747;"></div>
<div class="a" style="left:809.5px;top:30.4px;width:108.3px;height:10.8px;background:#434343;"></div>
<div class="a" style="left:809.5px;top:31.0px;width:21.4px;height:10.200000000000001px;background:#535353;"></div>
<svg class="a" style="left:812.0px;top:31.16px;overflow:visible" width="17" height="9.28"><text x="0" y="6.73" font-size="5.8" textLength="17" lengthAdjust="spacingAndGlyphs" fill="#e0e0e0" font-family="Liberation Sans">レイヤー</text></svg>
<svg class="a" style="left:911.5px;top:33.8px" width="4" height="4" viewBox="0 0 4 4"><g fill="#9a9a9a"><rect x="0" y="0" width="4" height="0.9"/><rect x="0" y="1.55" width="4" height="0.9"/><rect x="0" y="3.1" width="4" height="0.9"/></g></svg>
<div class="a" style="left:813.9px;top:45.9px;width:90.2px;height:8.2px;background:#3b3b3b;"></div>
<svg class="a" style="left:815.5px;top:47.3px" width="6" height="6" viewBox="0 0 6 6"><circle cx="2.4" cy="2.4" r="1.7" fill="none" stroke="#cfcfcf" stroke-width="0.8"/><path d="M3.6,3.6L5.5,5.5" stroke="#cfcfcf" stroke-width="0.9"/></svg>
<svg class="a" style="left:823.5px;top:45.68px;overflow:visible" width="28" height="8.64"><text x="0" y="6.26" font-size="5.4" textLength="28" lengthAdjust="spacingAndGlyphs" fill="#6f6f6f" font-family="Liberation Sans">すべてを検索</text></svg>
<svg class="a" style="left:908px;top:47px" width="7" height="6" viewBox="0 0 7 6"><path d="M0.3,0.3H6.7L4.2,3V5.8L2.8,5V3Z" fill="#e0e0e0"/></svg>
<div class="a" style="left:810.7px;top:58.1px;width:105.3px;height:8.2px;background:#4b6383;"></div>
<svg class="a" style="left:812.5px;top:60.7px" width="5" height="3.6" viewBox="0 0 5 3.6"><ellipse cx="2.5" cy="1.8" rx="2.1" ry="1.3" fill="none" stroke="#d8d8d8" stroke-width="0.6"/><circle cx="2.5" cy="1.8" r="0.7" fill="#d8d8d8"/></svg>
<div class="a" style="left:820.3px;top:58.2px;width:0.5px;height:8.6px;background:#5b7393;"></div>
<div class="a" style="left:828px;top:59.5px;width:1.6px;height:6px;background:#4a80f0;"></div>
<svg class="a" style="left:832.5px;top:60.5px" width="3" height="4" viewBox="0 0 3 4"><path d="M0.5,0.3L2.3,2L0.5,3.7" fill="none" stroke="#d8d8d8" stroke-width="0.7"/></svg>
<div class="a" style="left:839.8px;top:59.2px;width:6.6px;height:6.4px;border:0.5px solid #aab;background:linear-gradient(135deg,#fff 0%,#dfe8f8 50%,#a8d8f0 100%)"></div>
<svg class="a" style="left:849.5px;top:57.60px;overflow:visible" width="23" height="9.60"><text x="0" y="6.96" font-size="6" textLength="23" lengthAdjust="spacingAndGlyphs" fill="#e8e8e8" font-family="Liberation Sans">レイヤー 1</text></svg>
<div class="a" style="left:901.8px;top:58.2px;width:0.5px;height:8.6px;background:#5b7393;"></div>
<svg class="a" style="left:904.5px;top:61px" width="4" height="3" viewBox="0 0 4 3"><ellipse cx="2" cy="1.5" rx="1.6" ry="1.1" fill="none" stroke="#d8d8d8" stroke-width="0.6"/></svg>
<svg class="a" style="left:913.8px;top:58.6px" width="2.2" height="2.2" viewBox="0 0 2.2 2.2"><path d="M0,0H2.2V2.2Z" fill="#e8e8e8"/></svg>
<div class="a" style="left:811px;top:57.6px;width:105.2px;height:159.7px;border:1px solid #575757;border-width:0.5px"></div>
<svg class="a" style="left:811.5px;top:216.56px;overflow:visible" width="22.5" height="9.28"><text x="0" y="6.73" font-size="5.8" textLength="22.5" lengthAdjust="spacingAndGlyphs" fill="#d8d8d8" font-family="Liberation Sans">1 レイヤー</text></svg>
<svg class="a" style="left:842.5px;top:218.3px" width="7" height="6" viewBox="0 0 7 6"><path d="M0.5,1H4.5M2.5,1V5.5M0.5,5.5H4.5" stroke="#d0d0d0" stroke-width="0.8"/><rect x="4.5" y="3" width="2" height="2.5" fill="#d0d0d0"/></svg>
<svg class="a" style="left:851.5px;top:218.3px" width="7" height="6" viewBox="0 0 7 6"><path d="M0.5,1.5V5.5H4.5V3" fill="none" stroke="#d0d0d0" stroke-width="0.8"/><path d="M3.5,2.5L6,0.3M4.5,0.3H6V1.8" fill="none" stroke="#d0d0d0" stroke-width="0.6"/></svg>
<svg class="a" style="left:861px;top:218.3px" width="6" height="6" viewBox="0 0 6 6"><circle cx="2.5" cy="2.5" r="1.8" fill="none" stroke="#777" stroke-width="0.7"/><path d="M3.8,3.8L5.5,5.5" stroke="#777" stroke-width="0.8"/></svg>
<svg class="a" style="left:871px;top:218.3px" width="7" height="6" viewBox="0 0 7 6"><circle cx="3" cy="2.8" r="2.3" fill="none" stroke="#d0d0d0" stroke-width="0.8"/><rect x="1.8" y="1.8" width="3" height="2" fill="#d0d0d0"/><path d="M4.5,4.5L6.5,5.8" stroke="#d0d0d0" stroke-width="0.6"/></svg>
<svg class="a" style="left:881px;top:218.3px" width="8" height="6" viewBox="0 0 8 6"><path d="M0.5,0.5L2.5,2.5" stroke="#d0d0d0" stroke-width="0.7"/><rect x="3" y="1.2" width="4.5" height="4" rx="1" fill="none" stroke="#d0d0d0" stroke-width="0.7"/><rect x="4.2" y="2.4" width="2" height="1.6" fill="#d0d0d0"/></svg>
<svg class="a" style="left:891px;top:218.3px" width="7" height="6" viewBox="0 0 7 6"><rect x="0.6" y="0.8" width="5.8" height="4.6" rx="0.8" fill="none" stroke="#d0d0d0" stroke-width="0.7"/><rect x="1.8" y="2.6" width="3.4" height="1" fill="#d0d0d0"/></svg>
<svg class="a" style="left:902px;top:218.3px" width="6" height="6" viewBox="0 0 6 6"><path d="M1,1.5H5M1.5,1.5V5.6H4.5V1.5M2.3,0.4H3.7" fill="none" stroke="#6e6e6e" stroke-width="0.7"/></svg>
<div class="a" style="left:808.6px;top:225px;width:109.2px;height:1.2px;background:#3e3e3e;"></div>
<div class="a" style="left:809.5px;top:226px;width:108.3px;height:10.6px;background:#434343;"></div>
<div class="a" style="left:809.5px;top:226.6px;width:28.8px;height:10.0px;background:#535353;"></div>
<svg class="a" style="left:812.0px;top:226.66px;overflow:visible" width="23" height="9.28"><text x="0" y="6.73" font-size="5.8" textLength="23" lengthAdjust="spacingAndGlyphs" fill="#e0e0e0" font-family="Liberation Sans">アートボード</text></svg>
<svg class="a" style="left:911.5px;top:229.3px" width="4" height="4" viewBox="0 0 4 4"><g fill="#9a9a9a"><rect x="0" y="0" width="4" height="0.9"/><rect x="0" y="1.55" width="4" height="0.9"/><rect x="0" y="3.1" width="4" height="0.9"/></g></svg>
<div class="a" style="left:811px;top:239.5px;width:105.3px;height:100.3px;border:1px solid #575757;border-width:0.5px"></div>
<div class="a" style="left:811px;top:277.7px;width:105.3px;height:7.6px;background:#4b6383;"></div>
<div class="a" style="left:811px;top:246.89999999999998px;width:105.3px;height:0.5px;background:#5b5b5b;"></div>
<div class="t" style="left:813.3px;top:240.26px;font-size:5.6px;line-height:7.28px;color:#dcdcdc;">1</div>
<svg class="a" style="left:840px;top:239.42px;overflow:visible" width="22.5" height="8.96"><text x="0" y="6.50" font-size="5.6" textLength="22.5" lengthAdjust="spacingAndGlyphs" fill="#dcdcdc" font-family="Liberation Sans">sample_1</text></svg>
<svg class="a" style="left:906px;top:240.6px" width="5" height="5.4" viewBox="0 0 5 5.4"><path d="M0.6,1.3H3L4.4,2.6V5H0.6Z" fill="none" stroke="#d8d8d8" stroke-width="0.6"/><path d="M1.6,1.3V0.4" stroke="#d8d8d8" stroke-width="0.5"/></svg>
<div class="a" style="left:811px;top:254.49999999999997px;width:105.3px;height:0.5px;background:#5b5b5b;"></div>
<div class="t" style="left:813.3px;top:247.86px;font-size:5.6px;line-height:7.28px;color:#dcdcdc;">2</div>
<svg class="a" style="left:840px;top:247.02px;overflow:visible" width="22.5" height="8.96"><text x="0" y="6.50" font-size="5.6" textLength="22.5" lengthAdjust="spacingAndGlyphs" fill="#dcdcdc" font-family="Liberation Sans">sample_2</text></svg>
<svg class="a" style="left:906px;top:248.2px" width="5" height="5.4" viewBox="0 0 5 5.4"><path d="M0.6,1.3H3L4.4,2.6V5H0.6Z" fill="none" stroke="#d8d8d8" stroke-width="0.6"/><path d="M1.6,1.3V0.4" stroke="#d8d8d8" stroke-width="0.5"/></svg>
<div class="a" style="left:811px;top:262.1px;width:105.3px;height:0.5px;background:#5b5b5b;"></div>
<div class="t" style="left:813.3px;top:255.46px;font-size:5.6px;line-height:7.28px;color:#dcdcdc;">3</div>
<svg class="a" style="left:840px;top:254.62px;overflow:visible" width="33.1" height="8.96"><text x="0" y="6.50" font-size="5.6" textLength="33.1" lengthAdjust="spacingAndGlyphs" fill="#dcdcdc" font-family="Liberation Sans">アートボード 1</text></svg>
<svg class="a" style="left:906px;top:255.79999999999998px" width="5" height="5.4" viewBox="0 0 5 5.4"><path d="M0.6,1.3H3L4.4,2.6V5H0.6Z" fill="none" stroke="#d8d8d8" stroke-width="0.6"/><path d="M1.6,1.3V0.4" stroke="#d8d8d8" stroke-width="0.5"/></svg>
<div class="a" style="left:811px;top:269.70000000000005px;width:105.3px;height:0.5px;background:#5b5b5b;"></div>
<div class="t" style="left:813.3px;top:263.06px;font-size:5.6px;line-height:7.28px;color:#dcdcdc;">4</div>
<svg class="a" style="left:840px;top:262.22px;overflow:visible" width="46" height="8.96"><text x="0" y="6.50" font-size="5.6" textLength="46" lengthAdjust="spacingAndGlyphs" fill="#dcdcdc" font-family="Liberation Sans">アートボード 1 の...</text></svg>
<svg class="a" style="left:906px;top:263.4px" width="5" height="5.4" viewBox="0 0 5 5.4"><path d="M0.6,1.3H3L4.4,2.6V5H0.6Z" fill="none" stroke="#d8d8d8" stroke-width="0.6"/><path d="M1.6,1.3V0.4" stroke="#d8d8d8" stroke-width="0.5"/></svg>
<div class="a" style="left:811px;top:277.3px;width:105.3px;height:0.5px;background:#5b5b5b;"></div>
<div class="t" style="left:813.3px;top:270.66px;font-size:5.6px;line-height:7.28px;color:#dcdcdc;">5</div>
<svg class="a" style="left:840px;top:269.82px;overflow:visible" width="33.1" height="8.96"><text x="0" y="6.50" font-size="5.6" textLength="33.1" lengthAdjust="spacingAndGlyphs" fill="#dcdcdc" font-family="Liberation Sans">アートボード 2</text></svg>
<svg class="a" style="left:906px;top:270.99999999999994px" width="5" height="5.4" viewBox="0 0 5 5.4"><path d="M0.6,1.3H3L4.4,2.6V5H0.6Z" fill="none" stroke="#d8d8d8" stroke-width="0.6"/><path d="M1.6,1.3V0.4" stroke="#d8d8d8" stroke-width="0.5"/></svg>
<div class="a" style="left:811px;top:284.90000000000003px;width:105.3px;height:0.5px;background:#5b5b5b;"></div>
<div class="t" style="left:813.3px;top:278.26px;font-size:5.6px;line-height:7.28px;color:#dcdcdc;">6</div>
<svg class="a" style="left:840px;top:277.42px;overflow:visible" width="46" height="8.96"><text x="0" y="6.50" font-size="5.6" textLength="46" lengthAdjust="spacingAndGlyphs" fill="#dcdcdc" font-family="Liberation Sans">アートボード 2 の...</text></svg>
<svg class="a" style="left:906px;top:278.59999999999997px" width="5" height="5.4" viewBox="0 0 5 5.4"><path d="M0.6,1.3H3L4.4,2.6V5H0.6Z" fill="none" stroke="#d8d8d8" stroke-width="0.6"/><path d="M1.6,1.3V0.4" stroke="#d8d8d8" stroke-width="0.5"/></svg>
<div class="a" style="left:811px;top:292.5px;width:105.3px;height:0.5px;background:#5b5b5b;"></div>
<div class="t" style="left:813.3px;top:285.86px;font-size:5.6px;line-height:7.28px;color:#dcdcdc;">7</div>
<svg class="a" style="left:840px;top:285.02px;overflow:visible" width="43" height="8.96"><text x="0" y="6.50" font-size="5.6" textLength="43" lengthAdjust="spacingAndGlyphs" fill="#dcdcdc" font-family="Liberation Sans">sample_2 のコピー</text></svg>
<svg class="a" style="left:906px;top:286.19999999999993px" width="5" height="5.4" viewBox="0 0 5 5.4"><path d="M0.6,1.3H3L4.4,2.6V5H0.6Z" fill="none" stroke="#d8d8d8" stroke-width="0.6"/><path d="M1.6,1.3V0.4" stroke="#d8d8d8" stroke-width="0.5"/></svg>
<div class="a" style="left:827.3px;top:239.7px;width:0.5px;height:53.2px;background:#5b5b5b;"></div>
<div class="a" style="left:837.2px;top:239.7px;width:0.5px;height:53.2px;background:#5b5b5b;"></div>
<div class="a" style="left:903.4px;top:239.7px;width:0.5px;height:53.2px;background:#5b5b5b;"></div>
<svg class="a" style="left:812px;top:344px" width="7" height="7" viewBox="0 0 7 7"><g fill="#d8d8d8"><rect x="0.3" y="0.3" width="2" height="2"/><rect x="4.7" y="0.3" width="2" height="2"/><rect x="0.3" y="4.7" width="2" height="2"/><rect x="4.7" y="4.7" width="2" height="2"/></g><path d="M2,2L5,5M5,2L2,5" stroke="#d8d8d8" stroke-width="0.6"/></svg>
<svg class="a" style="left:871.5px;top:344px" width="5" height="7" viewBox="0 0 5 7"><path d="M2.5,0.3L4.8,3H3.4V6.7H1.6V3H0.2Z" fill="#e0e0e0"/></svg>
<svg class="a" style="left:882px;top:344px" width="5" height="7" viewBox="0 0 5 7"><path d="M2.5,6.7L4.8,4H3.4V0.3H1.6V4H0.2Z" fill="#e0e0e0"/></svg>
<svg class="a" style="left:892px;top:344px" width="6" height="7" viewBox="0 0 6 7"><rect x="0.5" y="1" width="5" height="5" rx="1.5" fill="none" stroke="#aaa" stroke-width="0.7"/><rect x="1.8" y="3.3" width="2.4" height="0.8" fill="#aaa"/></svg>
<svg class="a" style="left:902.5px;top:344px" width="6" height="7" viewBox="0 0 6 7"><path d="M1,1.5H5M1.5,1.5V6.5H4.5V1.5M2.3,0.5H3.7" fill="none" stroke="#b8b8b8" stroke-width="0.7"/></svg>
<div class="a" style="left:808.6px;top:351.5px;width:109.2px;height:1.5px;background:#3e3e3e;"></div>
<div class="a" style="left:809.5px;top:353px;width:108.3px;height:10.5px;background:#434343;"></div>
<div class="a" style="left:809.5px;top:353.6px;width:18.5px;height:9.9px;background:#535353;"></div>
<svg class="a" style="left:811.0px;top:356.05px" width="3" height="4.4" viewBox="0 0 3 4.4"><path d="M1.5,0.2L2.7,1.8H0.3Z M1.5,4.2L2.7,2.6H0.3Z" fill="#b8b8b8"/></svg>
<svg class="a" style="left:815.5px;top:353.61px;overflow:visible" width="8" height="9.28"><text x="0" y="6.73" font-size="5.8" textLength="8" lengthAdjust="spacingAndGlyphs" fill="#e0e0e0" font-family="Liberation Sans">透明</text></svg>
<svg class="a" style="left:911.5px;top:356.25px" width="4" height="4" viewBox="0 0 4 4"><g fill="#9a9a9a"><rect x="0" y="0" width="4" height="0.9"/><rect x="0" y="1.55" width="4" height="0.9"/><rect x="0" y="3.1" width="4" height="0.9"/></g></svg>
<div class="a" style="left:811.2px;top:367px;width:47.6px;height:7.5px;background:#454545;"></div>
<svg class="a" style="left:813px;top:366.16px;overflow:visible" width="9.5" height="9.28"><text x="0" y="6.73" font-size="5.8" textLength="9.5" lengthAdjust="spacingAndGlyphs" fill="#e0e0e0" font-family="Liberation Sans">通常</text></svg>
<svg class="a" style="left:853px;top:369.5px" width="5" height="3" viewBox="0 0 5 3"><path d="M0.6,0.6L2.5,2.4L4.4,0.6" fill="none" stroke="#d0d0d0" stroke-width="0.8"/></svg>
<svg class="a" style="left:862px;top:366.16px;overflow:visible" width="23" height="9.28"><text x="0" y="6.73" font-size="5.8" textLength="23" lengthAdjust="spacingAndGlyphs" fill="#d8e0f0" font-family="Liberation Sans">不透明度：</text></svg>
<div class="a" style="left:886.4px;top:367px;width:21.5px;height:7.5px;background:#454545;"></div>
<svg class="a" style="left:888px;top:366.16px;overflow:visible" width="14" height="9.28"><text x="0" y="6.73" font-size="5.8" textLength="14" lengthAdjust="spacingAndGlyphs" fill="#e8e8e8" font-family="Liberation Sans">100%</text></svg>
<div class="a" style="left:908.5px;top:367px;width:6.5px;height:7.5px;background:#4a4a4a;"></div>
<svg class="a" style="left:910.3px;top:368.8px" width="3" height="4" viewBox="0 0 3 4"><path d="M0.5,0.3L2.3,2L0.5,3.7" fill="none" stroke="#d8d8d8" stroke-width="0.7"/></svg>
<div class="a" style="left:811px;top:378.3px;width:105.2px;height:26.2px;border:1px solid #5b5b5b;border-width:0.5px"></div>
<div class="a" style="left:811.3px;top:378.6px;width:52px;height:25.6px;background:#565656;"></div>
<div class="a" style="left:863.4px;top:378.6px;width:0.5px;height:25.6px;background:#5b5b5b;"></div>
<div class="a" style="left:866px;top:380px;width:36px;height:8px;background:#5a5a5a;"></div>
<div class="t" style="left:866.0px;top:380.43px;width:36px;text-align:center;font-size:5.5px;line-height:7.15px;color:#7a7a7a;">マスク作成</div>
<div class="a" style="left:867px;top:390.5px;width:4px;height:4px;border:1px solid #777;border-width:0.6px"></div>
<svg class="a" style="left:873.5px;top:388.10px;overflow:visible" width="17" height="8.80"><text x="0" y="6.38" font-size="5.5" textLength="17" lengthAdjust="spacingAndGlyphs" fill="#777" font-family="Liberation Sans">クリップ</text></svg>
<div class="a" style="left:867px;top:398.3px;width:4px;height:4px;border:1px solid #777;border-width:0.6px"></div>
<svg class="a" style="left:873.5px;top:395.90px;overflow:visible" width="26" height="8.80"><text x="0" y="6.38" font-size="5.5" textLength="26" lengthAdjust="spacingAndGlyphs" fill="#777" font-family="Liberation Sans">マスクを反転</text></svg>
<div class="a" style="left:808.6px;top:406px;width:109.2px;height:1.2px;background:#3e3e3e;"></div>
<div class="a" style="left:809.5px;top:407px;width:108.3px;height:10.5px;background:#434343;"></div>
<div class="a" style="left:809.5px;top:407.6px;width:18.5px;height:9.9px;background:#535353;"></div>
<svg class="a" style="left:811.0px;top:410.05px" width="3" height="4.4" viewBox="0 0 3 4.4"><path d="M1.5,0.2L2.7,1.8H0.3Z M1.5,4.2L2.7,2.6H0.3Z" fill="#b8b8b8"/></svg>
<svg class="a" style="left:815.5px;top:407.61px;overflow:visible" width="8" height="9.28"><text x="0" y="6.73" font-size="5.8" textLength="8" lengthAdjust="spacingAndGlyphs" fill="#e0e0e0" font-family="Liberation Sans">整列</text></svg>
<svg class="a" style="left:911.5px;top:410.25px" width="4" height="4" viewBox="0 0 4 4"><g fill="#9a9a9a"><rect x="0" y="0" width="4" height="0.9"/><rect x="0" y="1.55" width="4" height="0.9"/><rect x="0" y="3.1" width="4" height="0.9"/></g></svg>
<svg class="a" style="left:811px;top:419.86px;overflow:visible" width="38" height="9.28"><text x="0" y="6.73" font-size="5.8" textLength="38" lengthAdjust="spacingAndGlyphs" fill="#d8e0f0" font-family="Liberation Sans">オブジェクトの整列：</text></svg>
<svg class="a" style="left:811.5px;top:432.3px" width="7" height="8" viewBox="0 0 7 8"><path d="M0.8,0.5V7.5" stroke="#e0e0e0" stroke-width="0.8"/><rect x="1.5" y="1.3" width="4.5" height="2" fill="#e0e0e0"/><rect x="1.5" y="4.6" width="3" height="2" fill="#e0e0e0"/></svg>
<svg class="a" style="left:826.5px;top:432.3px" width="7" height="8" viewBox="0 0 7 8"><path d="M3.5,0.5V7.5" stroke="#e0e0e0" stroke-width="0.8"/><rect x="1" y="1.3" width="5" height="2" fill="#e0e0e0"/><rect x="1.8" y="4.6" width="3.4" height="2" fill="#e0e0e0"/></svg>
<svg class="a" style="left:841.5px;top:432.3px" width="7" height="8" viewBox="0 0 7 8"><path d="M6.2,0.5V7.5" stroke="#e0e0e0" stroke-width="0.8"/><rect x="1" y="1.3" width="4.5" height="2" fill="#e0e0e0"/><rect x="2.5" y="4.6" width="3" height="2" fill="#e0e0e0"/></svg>
<svg class="a" style="left:878.5px;top:432.3px" width="7" height="8" viewBox="0 0 7 8"><path d="M0.5,0.8H7.5" stroke="#e0e0e0" stroke-width="0.8"/><rect x="1.3" y="1.5" width="2" height="5" fill="#e0e0e0"/><rect x="4.6" y="1.5" width="2" height="3.2" fill="#e0e0e0"/></svg>
<svg class="a" style="left:893.5px;top:432.3px" width="7" height="8" viewBox="0 0 7 8"><path d="M0.5,3.5H7.5" stroke="#e0e0e0" stroke-width="0.8"/><rect x="1.3" y="1" width="2" height="5" fill="#e0e0e0"/><rect x="4.6" y="1.8" width="2" height="3.4" fill="#e0e0e0"/></svg>
<svg class="a" style="left:907.5px;top:432.3px" width="7" height="8" viewBox="0 0 7 8"><path d="M0.5,6.2H7.5" stroke="#e0e0e0" stroke-width="0.8"/><rect x="1.3" y="1" width="2" height="5" fill="#e0e0e0"/><rect x="4.6" y="2.8" width="2" height="3.2" fill="#e0e0e0"/></svg>
<svg class="a" style="left:811px;top:445.36px;overflow:visible" width="38" height="9.28"><text x="0" y="6.73" font-size="5.8" textLength="38" lengthAdjust="spacingAndGlyphs" fill="#d8e0f0" font-family="Liberation Sans">オブジェクトの分布：</text></svg>
<svg class="a" style="left:811.5px;top:457.1px" width="7" height="8" viewBox="0 0 7 8"><path d="M0.5,1H7.5M0.5,6H7.5" stroke="#e0e0e0" stroke-width="0.7"/><rect x="1.5" y="2.5" width="5" height="2" fill="#e0e0e0"/></svg>
<svg class="a" style="left:826.5px;top:457.1px" width="7" height="8" viewBox="0 0 7 8"><path d="M0.5,1H7.5M0.5,6H7.5" stroke="#e0e0e0" stroke-width="0.7"/><rect x="1.5" y="2.5" width="5" height="2" fill="#e0e0e0"/></svg>
<svg class="a" style="left:841.5px;top:457.1px" width="7" height="8" viewBox="0 0 7 8"><path d="M0.5,1H7.5M0.5,6H7.5" stroke="#e0e0e0" stroke-width="0.7"/><rect x="1.5" y="2.5" width="5" height="2" fill="#e0e0e0"/></svg>
<svg class="a" style="left:878.5px;top:457.1px" width="7" height="8" viewBox="0 0 7 8"><path d="M1,0.5V7.5M6,0.5V7.5" stroke="#e0e0e0" stroke-width="0.7"/><rect x="2.5" y="1.5" width="2" height="5" fill="#e0e0e0"/></svg>
<svg class="a" style="left:893.5px;top:457.1px" width="7" height="8" viewBox="0 0 7 8"><path d="M1,0.5V7.5M6,0.5V7.5" stroke="#e0e0e0" stroke-width="0.7"/><rect x="2.5" y="1.5" width="2" height="5" fill="#e0e0e0"/></svg>
<svg class="a" style="left:907.5px;top:457.1px" width="7" height="8" viewBox="0 0 7 8"><path d="M1,0.5V7.5M6,0.5V7.5" stroke="#e0e0e0" stroke-width="0.7"/><rect x="2.5" y="1.5" width="2" height="5" fill="#e0e0e0"/></svg>
<div class="a" style="left:811px;top:468px;width:105px;height:0.5px;background:#5d5d5d;"></div>
<div class="a" style="left:870px;top:470px;width:0.5px;height:20px;background:#5d5d5d;"></div>
<svg class="a" style="left:811px;top:470.86px;overflow:visible" width="27" height="9.28"><text x="0" y="6.73" font-size="5.8" textLength="27" lengthAdjust="spacingAndGlyphs" fill="#d8e0f0" font-family="Liberation Sans">等間隔に分布：</text></svg>
<svg class="a" style="left:881px;top:470.86px;overflow:visible" width="10" height="9.28"><text x="0" y="6.73" font-size="5.8" textLength="10" lengthAdjust="spacingAndGlyphs" fill="#d8e0f0" font-family="Liberation Sans">整列：</text></svg>
<svg class="a" style="left:811.5px;top:482.5px" width="7" height="8" viewBox="0 0 7 8"><path d="M0.5,1H7.5M0.5,6H7.5" stroke="#e0e0e0" stroke-width="0.7"/><rect x="1.5" y="2.5" width="5" height="2" fill="#e0e0e0"/></svg>
<svg class="a" style="left:824.5px;top:482.5px" width="7" height="8" viewBox="0 0 7 8"><path d="M1,0.5V7.5M6,0.5V7.5" stroke="#e0e0e0" stroke-width="0.7"/><rect x="2.5" y="1.5" width="2" height="5" fill="#e0e0e0"/></svg>
<svg class="a" style="left:835.5px;top:482px" width="5" height="8" viewBox="0 0 5 8"><path d="M0.8,2.8L2.5,1L4.2,2.8M0.8,5.2L2.5,7L4.2,5.2" fill="none" stroke="#c8c8c8" stroke-width="0.8"/></svg>
<div class="a" style="left:841px;top:482.3px;width:20px;height:7.5px;background:#4e4e4e;"></div>
<svg class="a" style="left:843px;top:481.52px;overflow:visible" width="9" height="8.96"><text x="0" y="6.50" font-size="5.6" textLength="9" lengthAdjust="spacingAndGlyphs" fill="#7a7a7a" font-family="Liberation Sans">0 px</text></svg>
<div class="a" style="left:880.5px;top:481.6px;width:9px;height:8.6px;background:#3a3a3a;"></div>
<svg class="a" style="left:882px;top:483px" width="6" height="6" viewBox="0 0 6 6"><rect x="0.5" y="0.5" width="2.2" height="2.2" fill="#e0e0e0"/><rect x="2" y="2" width="3.5" height="3.5" fill="#e0e0e0"/></svg>
<svg class="a" style="left:895.5px;top:483px" width="6" height="6" viewBox="0 0 6 6"><g fill="#c0c0c0"><rect x="0.3" y="0.3" width="1.2" height="1.2"/><rect x="2.4" y="0.3" width="1.2" height="1.2"/><rect x="4.5" y="0.3" width="1.2" height="1.2"/><rect x="0.3" y="2.4" width="1.2" height="1.2"/><rect x="2.4" y="2.4" width="1.2" height="1.2"/><rect x="4.5" y="2.4" width="1.2" height="1.2"/><rect x="0.3" y="4.5" width="1.2" height="1.2"/><rect x="2.4" y="4.5" width="1.2" height="1.2"/><rect x="4.5" y="4.5" width="1.2" height="1.2"/></g></svg>
<svg class="a" style="left:908.5px;top:483px" width="6" height="6" viewBox="0 0 6 6"><g fill="#c0c0c0"><rect x="0.3" y="0.3" width="1.5" height="1.5"/><rect x="4.2" y="0.3" width="1.5" height="1.5"/><rect x="0.3" y="4.2" width="1.5" height="1.5"/><rect x="4.2" y="4.2" width="1.5" height="1.5"/><rect x="2.2" y="2.2" width="1.6" height="1.6"/></g></svg>
<div class="a" style="left:808.6px;top:494.5px;width:109.2px;height:0.8px;background:#3e3e3e;"></div>
<div class="a" style="left:809.5px;top:495.2px;width:108.3px;height:9.6px;background:#434343;"></div>
<div class="a" style="left:809.5px;top:495.8px;width:34.2px;height:9.0px;background:#535353;"></div>
<svg class="a" style="left:812.0px;top:495.36px;overflow:visible" width="30" height="9.28"><text x="0" y="6.73" font-size="5.8" textLength="30" lengthAdjust="spacingAndGlyphs" fill="#e0e0e0" font-family="Liberation Sans">パスファインダー</text></svg>
<svg class="a" style="left:911.5px;top:498.0px" width="4" height="4" viewBox="0 0 4 4"><g fill="#9a9a9a"><rect x="0" y="0" width="4" height="0.9"/><rect x="0" y="1.55" width="4" height="0.9"/><rect x="0" y="3.1" width="4" height="0.9"/></g></svg>
<svg class="a" style="left:811px;top:507.36px;overflow:visible" width="22" height="9.28"><text x="0" y="6.73" font-size="5.8" textLength="22" lengthAdjust="spacingAndGlyphs" fill="#d8e0f0" font-family="Liberation Sans">形状モード：</text></svg>
<svg class="a" style="left:812.5px;top:519.5px" width="7" height="7" viewBox="0 0 7 7"><rect x="0.5" y="0.5" width="4" height="4" fill="#e0e0e0"/><rect x="2.5" y="2.5" width="4" height="4" fill="#e0e0e0"/></svg>
<svg class="a" style="left:826.0px;top:519.5px" width="7" height="7" viewBox="0 0 7 7"><rect x="0.5" y="0.5" width="4" height="4" fill="#e0e0e0"/><rect x="2.5" y="2.5" width="4" height="4" fill="#535353" stroke="#e0e0e0" stroke-width="0.7"/></svg>
<svg class="a" style="left:839.5px;top:519.5px" width="7" height="7" viewBox="0 0 7 7"><rect x="0.5" y="0.5" width="4" height="4" fill="none" stroke="#e0e0e0" stroke-width="0.7"/><rect x="2.5" y="2.5" width="4" height="4" fill="none" stroke="#e0e0e0" stroke-width="0.7"/><rect x="2.5" y="2.5" width="2" height="2" fill="#e0e0e0"/></svg>
<svg class="a" style="left:853.0px;top:519.5px" width="7" height="7" viewBox="0 0 7 7"><rect x="0.5" y="0.5" width="4" height="4" fill="#e0e0e0"/><rect x="2.5" y="2.5" width="4" height="4" fill="#e0e0e0"/><rect x="2.5" y="2.5" width="2" height="2" fill="#535353"/></svg>
<div class="a" style="left:866px;top:519px;width:32px;height:8px;background:#5a5a5a;"></div>
<div class="t" style="left:867.0px;top:519.42px;width:30px;text-align:center;font-size:5.5px;line-height:7.15px;color:#7a7a7a;">拡張</div>
<svg class="a" style="left:811px;top:530.56px;overflow:visible" width="33" height="9.28"><text x="0" y="6.73" font-size="5.8" textLength="33" lengthAdjust="spacingAndGlyphs" fill="#d8e0f0" font-family="Liberation Sans">パスファインダー：</text></svg>
<svg class="a" style="left:813.0px;top:542.5px" width="7" height="7" viewBox="0 0 7 7"><rect x="0.5" y="0.5" width="4" height="4" fill="none" stroke="#e0e0e0" stroke-width="0.7"/><rect x="2.5" y="2.5" width="4" height="4" fill="none" stroke="#e0e0e0" stroke-width="0.7"/><rect x="2.5" y="2.5" width="2" height="2" fill="#e0e0e0"/></svg>
<svg class="a" style="left:827.0px;top:542.5px" width="7" height="7" viewBox="0 0 7 7"><rect x="0.5" y="0.5" width="4" height="4" fill="#e0e0e0"/><rect x="2.5" y="2.5" width="4" height="4" fill="#e0e0e0"/></svg>
<svg class="a" style="left:841.5px;top:542.5px" width="7" height="7" viewBox="0 0 7 7"><rect x="0.5" y="0.5" width="4" height="4" fill="#e0e0e0"/><rect x="2.5" y="2.5" width="4" height="4" fill="#e0e0e0"/><rect x="2.5" y="2.5" width="2" height="2" fill="#535353"/></svg>
<svg class="a" style="left:856.5px;top:542.5px" width="7" height="7" viewBox="0 0 7 7"><rect x="0.5" y="0.5" width="4" height="4" fill="#e0e0e0"/><rect x="2.5" y="2.5" width="4" height="4" fill="#535353" stroke="#e0e0e0" stroke-width="0.7"/></svg>
<svg class="a" style="left:872.5px;top:542.5px" width="7" height="7" viewBox="0 0 7 7"><rect x="0.5" y="0.5" width="4" height="4" fill="none" stroke="#e0e0e0" stroke-width="0.7"/><rect x="2.5" y="2.5" width="4" height="4" fill="none" stroke="#e0e0e0" stroke-width="0.7"/><rect x="2.5" y="2.5" width="2" height="2" fill="#e0e0e0"/></svg>
<svg class="a" style="left:888.0px;top:542.5px" width="7" height="7" viewBox="0 0 7 7"><rect x="0.5" y="0.5" width="4" height="4" fill="#e0e0e0"/><rect x="2.5" y="2.5" width="4" height="4" fill="#535353" stroke="#e0e0e0" stroke-width="0.7"/></svg>
<div class="a" style="left:919.7px;top:30.4px;width:100.9px;height:10.6px;background:#434343;"></div>
<div class="a" style="left:919.7px;top:31.0px;width:19.1px;height:10.0px;background:#535353;"></div>
<svg class="a" style="left:921.2px;top:33.49999999999999px" width="3" height="4.4" viewBox="0 0 3 4.4"><path d="M1.5,0.2L2.7,1.8H0.3Z M1.5,4.2L2.7,2.6H0.3Z" fill="#b8b8b8"/></svg>
<svg class="a" style="left:925.7px;top:31.06px;overflow:visible" width="12" height="9.28"><text x="0" y="6.73" font-size="5.8" textLength="12" lengthAdjust="spacingAndGlyphs" fill="#e0e0e0" font-family="Liberation Sans">カラー</text></svg>
<svg class="a" style="left:1014.3000000000001px;top:33.699999999999996px" width="4" height="4" viewBox="0 0 4 4"><g fill="#9a9a9a"><rect x="0" y="0" width="4" height="0.9"/><rect x="0" y="1.55" width="4" height="0.9"/><rect x="0" y="3.1" width="4" height="0.9"/></g></svg>
<svg class="a" style="left:921.8px;top:43.56px;overflow:visible" width="42" height="9.28"><text x="0" y="6.73" font-size="5.8" textLength="42" lengthAdjust="spacingAndGlyphs" fill="#d8e0f0" font-family="Liberation Sans">最近使用したカラー</text></svg>
<div class="a" style="left:921.8px;top:54.3px;width:96.4px;height:5.8px;background:#4a4a4a;"></div>
<div class="a" style="left:921.8px;top:54.3px;width:5.400000000000068px;height:5.8px;background:#a04c50;"></div>
<div class="a" style="left:927.6px;top:54.3px;width:5.499999999999977px;height:5.8px;background:#8c4448;"></div>
<div class="a" style="left:933.5px;top:54.3px;width:5.700000000000022px;height:5.8px;background:#000000;"></div>
<div class="a" style="left:939.6px;top:54.3px;width:5.499999999999977px;height:5.8px;background:#f27a7c;"></div>
<div class="a" style="left:945.5px;top:54.3px;width:5.700000000000022px;height:5.8px;background:#5a8ee0;"></div>
<div class="a" style="left:951.6px;top:54.3px;width:5.6px;height:5.8px;background:#ee1a6c;"></div>
<div class="a" style="left:957.6px;top:54.3px;width:5.499999999999977px;height:5.8px;background:#808080;"></div>
<div class="a" style="left:963.5px;top:54.3px;width:5.499999999999977px;height:5.8px;background:#e6e6e6;"></div>
<div class="a" style="left:969.4px;top:54.3px;width:5.700000000000022px;height:5.8px;background:#2e2e2e;"></div>
<div class="a" style="left:975.5px;top:54.3px;width:5.499999999999977px;height:5.8px;background:#b2b2b2;"></div>
<div class="a" style="left:981.4px;top:54.3px;width:5.6px;height:5.8px;background:#ffffff;"></div>
<div class="a" style="left:993.1px;top:54.3px;width:5.499999999999977px;height:5.8px;background:#ea9e22;"></div>
<div class="a" style="left:999px;top:54.3px;width:5.700000000000022px;height:5.8px;background:#ea9e22;"></div>
<svg class="a" style="left:921.5px;top:63.5px" width="6" height="5" viewBox="0 0 6 5"><circle cx="2.5" cy="2.5" r="2" fill="#e0e0e0"/><path d="M2.5,0.5V4.5M0.5,2.5H4.5" stroke="#333" stroke-width="0.6"/></svg>
<svg class="a" style="left:930px;top:63.5px" width="5" height="5" viewBox="0 0 5 5"><path d="M1,1.5H3.5V4M2.5,3L3.5,4L4.5,3" fill="none" stroke="#d0d0d0" stroke-width="0.6"/></svg>
<div class="a" style="left:926px;top:74px;width:7px;height:8px;background:#111;border:1px solid #e0e0e0"></div>
<div class="a" style="left:927.6px;top:75.6px;width:3.8px;height:4.8px;background:#535353;"></div>
<div class="a" style="left:922.2px;top:70.8px;width:6.8px;height:7.2px;background:#ffffff;"></div>
<svg class="a" style="left:940px;top:63.66px;overflow:visible" width="4" height="9.28"><text x="0" y="6.73" font-size="5.8" textLength="4" lengthAdjust="spacingAndGlyphs" fill="#d0d0d0" font-family="Liberation Sans">H</text></svg>
<div class="a" style="left:947.3px;top:67.39999999999999px;width:40.4px;height:1.8px;background:#f0f0f0"></div>
<svg class="a" style="left:946px;top:69.1px" width="4" height="3" viewBox="0 0 4 3"><path d="M2,0.2L3.8,2.8H0.2Z" fill="#e8e8e8"/></svg>
<div class="a" style="left:992.2px;top:64.7px;width:12.6px;height:7.5px;background:#454545;"></div>
<div class="t" style="left:993.8px;top:64.53px;font-size:5.8px;line-height:7.54px;color:#e0e0e0;">0</div>
<div class="t" style="left:1007.5px;top:64.53px;font-size:5.8px;line-height:7.54px;color:#d0d0d0;">°</div>
<svg class="a" style="left:940px;top:76.86px;overflow:visible" width="4" height="9.28"><text x="0" y="6.73" font-size="5.8" textLength="4" lengthAdjust="spacingAndGlyphs" fill="#d0d0d0" font-family="Liberation Sans">S</text></svg>
<div class="a" style="left:947.3px;top:80.6px;width:40.4px;height:1.8px;background:linear-gradient(90deg,#fff,#e00000)"></div>
<svg class="a" style="left:946px;top:82.3px" width="4" height="3" viewBox="0 0 4 3"><path d="M2,0.2L3.8,2.8H0.2Z" fill="#e8e8e8"/></svg>
<div class="a" style="left:992.2px;top:77.9px;width:12.6px;height:7.5px;background:#454545;"></div>
<div class="t" style="left:993.8px;top:77.73px;font-size:5.8px;line-height:7.54px;color:#e0e0e0;">0</div>
<div class="t" style="left:1007.5px;top:77.73px;font-size:5.8px;line-height:7.54px;color:#d0d0d0;">%</div>
<svg class="a" style="left:940px;top:89.96px;overflow:visible" width="4" height="9.28"><text x="0" y="6.73" font-size="5.8" textLength="4" lengthAdjust="spacingAndGlyphs" fill="#d0d0d0" font-family="Liberation Sans">B</text></svg>
<div class="a" style="left:947.3px;top:93.69999999999999px;width:40.4px;height:1.8px;background:linear-gradient(90deg,#000,#fff)"></div>
<svg class="a" style="left:985.3px;top:95.39999999999999px" width="4" height="3" viewBox="0 0 4 3"><path d="M2,0.2L3.8,2.8H0.2Z" fill="#e8e8e8"/></svg>
<div class="a" style="left:992.2px;top:91.0px;width:12.6px;height:7.5px;background:#454545;"></div>
<div class="t" style="left:993.8px;top:90.83px;font-size:5.8px;line-height:7.54px;color:#e0e0e0;">100</div>
<div class="t" style="left:1007.5px;top:90.83px;font-size:5.8px;line-height:7.54px;color:#d0d0d0;">%</div>
<div class="a" style="left:922px;top:105.7px;width:5px;height:5.6px;background:#fff;"></div>
<svg class="a" style="left:922px;top:105.7px" width="5" height="5.6" viewBox="0 0 5 5.6"><path d="M0.3,5.3L4.7,0.3" stroke="#e02020" stroke-width="0.9"/></svg>
<div class="a" style="left:927px;top:105.7px;width:5px;height:5.6px;background:#000;"></div>
<div class="a" style="left:932px;top:105.7px;width:5px;height:5.6px;background:#fff;"></div>
<div class="a" style="left:981.4px;top:106.7px;width:25.2px;height:8.1px;background:#454545;"></div>
<svg class="a" style="left:983px;top:106.06px;overflow:visible" width="3" height="9.28"><text x="0" y="6.73" font-size="5.8" textLength="3" lengthAdjust="spacingAndGlyphs" fill="#d0d0d0" font-family="Liberation Sans">#</text></svg>
<svg class="a" style="left:988.5px;top:106.26px;overflow:visible" width="11" height="9.28"><text x="0" y="6.73" font-size="5.8" textLength="11" lengthAdjust="spacingAndGlyphs" fill="#e0e0e0" font-family="Liberation Sans">ffffff</text></svg>
<svg class="a" style="left:1010px;top:106.5px" width="8" height="8" viewBox="0 0 8 8"><rect x="0.5" y="2.5" width="5" height="5" fill="none" stroke="#9a9a9a" stroke-width="0.6"/><path d="M2.5,2.5V0.5H7.5V5.5H5.5" fill="none" stroke="#9a9a9a" stroke-width="0.6"/></svg>
<div class="a" style="left:922px;top:118.9px;width:91.1px;height:62.8px;background:linear-gradient(180deg,#fff 0%,rgba(255,255,255,0) 50%,rgba(0,0,0,0) 50%,#000 100%),linear-gradient(90deg,#f00 0%,#ff0 16.67%,#0f0 33.33%,#0ff 50%,#00f 66.67%,#f0f 83.33%,#f00 100%)"></div>
<div class="a" style="left:919.7px;top:185.3px;width:100.9px;height:11.5px;background:#434343;"></div>
<div class="a" style="left:919.7px;top:185.9px;width:18.3px;height:10.9px;background:#535353;"></div>
<svg class="a" style="left:921.2px;top:188.85000000000002px" width="3" height="4.4" viewBox="0 0 3 4.4"><path d="M1.5,0.2L2.7,1.8H0.3Z M1.5,4.2L2.7,2.6H0.3Z" fill="#b8b8b8"/></svg>
<svg class="a" style="left:925.7px;top:186.41px;overflow:visible" width="4.5" height="9.28"><text x="0" y="6.73" font-size="5.8" textLength="4.5" lengthAdjust="spacingAndGlyphs" fill="#e0e0e0" font-family="Liberation Sans">線</text></svg>
<svg class="a" style="left:1014.3000000000001px;top:189.05px" width="4" height="4" viewBox="0 0 4 4"><g fill="#9a9a9a"><rect x="0" y="0" width="4" height="0.9"/><rect x="0" y="1.55" width="4" height="0.9"/><rect x="0" y="3.1" width="4" height="0.9"/></g></svg>
<svg class="a" style="left:941px;top:199.46px;overflow:visible" width="13" height="9.28"><text x="0" y="6.73" font-size="5.8" textLength="13" lengthAdjust="spacingAndGlyphs" fill="#c8d0e0" font-family="Liberation Sans">線幅：</text></svg>
<svg class="a" style="left:955.7px;top:200.1px" width="5" height="8" viewBox="0 0 5 8"><path d="M0.8,2.8L2.5,1L4.2,2.8M0.8,5.2L2.5,7L4.2,5.2" fill="none" stroke="#c8c8c8" stroke-width="0.8"/></svg>
<div class="a" style="left:962.9px;top:200.4px;width:21.4px;height:7.5px;background:#454545;"></div>
<div class="t" style="left:964.5px;top:200.33px;font-size:5.8px;line-height:7.54px;color:#e0e0e0;">1 pt</div>
<div class="a" style="left:984.8px;top:200.4px;width:6.5px;height:7.5px;background:#4a4a4a;"></div>
<svg class="a" style="left:985.6px;top:202.8px" width="5" height="3" viewBox="0 0 5 3"><path d="M0.6,0.6L2.5,2.4L4.4,0.6" fill="none" stroke="#d0d0d0" stroke-width="0.8"/></svg>
<svg class="a" style="left:941px;top:210.36px;overflow:visible" width="13" height="9.28"><text x="0" y="6.73" font-size="5.8" textLength="13" lengthAdjust="spacingAndGlyphs" fill="#c8d0e0" font-family="Liberation Sans">線端：</text></svg>
<div class="a" style="left:955.6px;top:211px;width:8.3px;height:8.3px;background:#3a3a3a;"></div>
<svg class="a" style="left:956.6px;top:212px" width="6" height="6" viewBox="0 0 6 6"><rect x="0.5" y="1.5" width="3.5" height="3" fill="#e0e0e0"/><path d="M4,0.5V5.5" stroke="#e0e0e0" stroke-width="0.7"/></svg>
<svg class="a" style="left:966px;top:212px" width="6" height="6" viewBox="0 0 6 6"><path d="M5.5,1H2.5A2,2 0 0 0 2.5,5H5.5" fill="none" stroke="#e0e0e0" stroke-width="0.8"/><rect x="3" y="2.3" width="2.5" height="1.4" fill="#e0e0e0"/></svg>
<svg class="a" style="left:975.5px;top:212px" width="6" height="6" viewBox="0 0 6 6"><rect x="0.5" y="0.5" width="5" height="5" fill="none" stroke="#e0e0e0" stroke-width="0.7"/><rect x="2" y="2" width="2" height="2" fill="#e0e0e0"/></svg>
<svg class="a" style="left:931px;top:221.66px;overflow:visible" width="23" height="9.28"><text x="0" y="6.73" font-size="5.8" textLength="23" lengthAdjust="spacingAndGlyphs" fill="#c8d0e0" font-family="Liberation Sans">角の形状：</text></svg>
<div class="a" style="left:955.6px;top:222.3px;width:8.3px;height:8.3px;background:#3a3a3a;"></div>
<svg class="a" style="left:956.6px;top:223.3px" width="6" height="6" viewBox="0 0 6 6"><path d="M1,5.5V1H5.5" fill="none" stroke="#e0e0e0" stroke-width="1.2"/><rect x="2.5" y="2.5" width="3" height="3" fill="#e0e0e0"/></svg>
<svg class="a" style="left:966px;top:223.3px" width="6" height="6" viewBox="0 0 6 6"><path d="M1,5.5V3A2,2 0 0 1 3,1H5.5" fill="none" stroke="#e0e0e0" stroke-width="1.2"/><rect x="2.5" y="2.5" width="3" height="3" fill="#e0e0e0"/></svg>
<svg class="a" style="left:975.5px;top:223.3px" width="6" height="6" viewBox="0 0 6 6"><path d="M1,5.5V2.5L2.5,1H5.5" fill="none" stroke="#e0e0e0" stroke-width="1.2"/><rect x="2.5" y="2.5" width="3" height="3" fill="#e0e0e0"/></svg>
<svg class="a" style="left:985px;top:221.66px;overflow:visible" width="13" height="9.28"><text x="0" y="6.73" font-size="5.8" textLength="13" lengthAdjust="spacingAndGlyphs" fill="#c8d0e0" font-family="Liberation Sans">比率：</text></svg>
<div class="a" style="left:1000.2px;top:222.2px;width:16.5px;height:7.5px;background:#454545;"></div>
<div class="t" style="left:1002px;top:222.53px;font-size:5.8px;line-height:7.54px;color:#e0e0e0;">10</div>
<svg class="a" style="left:931px;top:232.26px;overflow:visible" width="23" height="9.28"><text x="0" y="6.73" font-size="5.8" textLength="23" lengthAdjust="spacingAndGlyphs" fill="#c8d0e0" font-family="Liberation Sans">線の位置：</text></svg>
<svg class="a" style="left:956.6px;top:233.9px" width="6" height="6" viewBox="0 0 6 6"><path d="M1,0.5V5.5H5.5" fill="none" stroke="#e0e0e0" stroke-width="0.8"/><rect x="2.2" y="2" width="1.2" height="2.5" fill="#e0e0e0"/><rect x="4" y="3" width="1.2" height="1.5" fill="#e0e0e0"/></svg>
<div class="a" style="left:965.4px;top:232.9px;width:8.3px;height:8.3px;background:#3a3a3a;"></div>
<svg class="a" style="left:966.4px;top:233.9px" width="6" height="6" viewBox="0 0 6 6"><path d="M0.5,5H5.5" stroke="#e0e0e0" stroke-width="0.8"/><rect x="1.5" y="1" width="1.5" height="4.5" fill="#e0e0e0"/><rect x="3.5" y="2.5" width="1.5" height="3" fill="#e0e0e0"/></svg>
<svg class="a" style="left:975.5px;top:233.9px" width="6" height="6" viewBox="0 0 6 6"><path d="M1,0.5V5.5H5.5" fill="none" stroke="#e0e0e0" stroke-width="0.8"/><rect x="2" y="2" width="2.5" height="2.5" fill="#e0e0e0"/></svg>
<div class="a" style="left:921px;top:244.3px;width:97px;height:0.5px;background:#5d5d5d;"></div>
<div class="a" style="left:922.5px;top:247.5px;width:4.6px;height:4.6px;border:1px solid #cfcfcf;border-width:0.6px"></div>
<svg class="a" style="left:929px;top:245.16px;overflow:visible" width="8.5" height="9.28"><text x="0" y="6.73" font-size="5.8" textLength="8.5" lengthAdjust="spacingAndGlyphs" fill="#d8e0f0" font-family="Liberation Sans">破線</text></svg>
<svg class="a" style="left:990px;top:246.8px" width="9" height="6" viewBox="0 0 9 6"><path d="M0.5,2V0.5H2.5M6.5,0.5H8.5V2M0.5,4V5.5H2.5M6.5,5.5H8.5V4M3.5,0.5H5.5M3.5,5.5H5.5" fill="none" stroke="#9a9a9a" stroke-width="0.6"/></svg>
<svg class="a" style="left:1005px;top:246.8px" width="13" height="6" viewBox="0 0 13 6"><path d="M0.5,2V0.5H2.5M10.5,0.5H12.5V2M0.5,4V5.5H2.5M10.5,5.5H12.5V4M4,0.5H9M4,5.5H9" fill="none" stroke="#9a9a9a" stroke-width="0.6"/></svg>
<div class="a" style="left:922px;top:256.7px;width:14px;height:7.9px;background:#4e4e4e;"></div>
<div class="t" style="left:922.0px;top:265.69px;width:14px;text-align:center;font-size:5.4px;line-height:7.02px;color:#777;">線分</div>
<div class="a" style="left:938.5px;top:256.7px;width:14px;height:7.9px;background:#4e4e4e;"></div>
<div class="t" style="left:938.5px;top:265.69px;width:14px;text-align:center;font-size:5.4px;line-height:7.02px;color:#777;">間隔</div>
<div class="a" style="left:955px;top:256.7px;width:14px;height:7.9px;background:#4e4e4e;"></div>
<div class="t" style="left:955.0px;top:265.69px;width:14px;text-align:center;font-size:5.4px;line-height:7.02px;color:#777;">線分</div>
<div class="a" style="left:971.5px;top:256.7px;width:14px;height:7.9px;background:#4e4e4e;"></div>
<div class="t" style="left:971.5px;top:265.69px;width:14px;text-align:center;font-size:5.4px;line-height:7.02px;color:#777;">間隔</div>
<div class="a" style="left:988px;top:256.7px;width:14px;height:7.9px;background:#4e4e4e;"></div>
<div class="t" style="left:988.0px;top:265.69px;width:14px;text-align:center;font-size:5.4px;line-height:7.02px;color:#777;">線分</div>
<div class="a" style="left:1004.5px;top:256.7px;width:14px;height:7.9px;background:#4e4e4e;"></div>
<div class="t" style="left:1004.5px;top:265.69px;width:14px;text-align:center;font-size:5.4px;line-height:7.02px;color:#777;">間隔</div>
<div class="a" style="left:921px;top:275.5px;width:97px;height:0.5px;background:#5d5d5d;"></div>
<svg class="a" style="left:941px;top:278.16px;overflow:visible" width="13" height="9.28"><text x="0" y="6.73" font-size="5.8" textLength="13" lengthAdjust="spacingAndGlyphs" fill="#7c7c7c" font-family="Liberation Sans">矢印：</text></svg>
<div class="a" style="left:955.5px;top:278.8px;width:16.8px;height:8px;background:#7a7a7a;"></div>
<div class="a" style="left:972.3px;top:278.8px;width:6.6px;height:8px;background:#4e4e4e;"></div>
<svg class="a" style="left:973.1px;top:281.5px" width="5" height="3" viewBox="0 0 5 3"><path d="M0.6,0.6L2.5,2.4L4.4,0.6" fill="none" stroke="#777" stroke-width="0.8"/></svg>
<div class="a" style="left:982px;top:278.8px;width:17.2px;height:8px;background:#7a7a7a;"></div>
<div class="a" style="left:999.2px;top:278.8px;width:6.6px;height:8px;background:#4e4e4e;"></div>
<svg class="a" style="left:1000px;top:281.5px" width="5" height="3" viewBox="0 0 5 3"><path d="M0.6,0.6L2.5,2.4L4.4,0.6" fill="none" stroke="#777" stroke-width="0.8"/></svg>
<svg class="a" style="left:1010.5px;top:279.5px" width="6" height="6" viewBox="0 0 6 6"><path d="M0.5,1.5H5M3.5,0.3L5,1.5L3.5,2.7M5.5,4.5H1M2.5,3.3L1,4.5L2.5,5.7" fill="none" stroke="#888" stroke-width="0.6"/></svg>
<svg class="a" style="left:941px;top:290.16px;overflow:visible" width="13" height="9.28"><text x="0" y="6.73" font-size="5.8" textLength="13" lengthAdjust="spacingAndGlyphs" fill="#7c7c7c" font-family="Liberation Sans">倍率：</text></svg>
<div class="a" style="left:956px;top:290.8px;width:24px;height:8px;background:#4e4e4e;"></div>
<div class="t" style="left:963.5px;top:291.03px;font-size:5.8px;line-height:7.54px;color:#7c7c7c;">100%</div>
<svg class="a" style="left:957px;top:291px" width="4" height="7" viewBox="0 0 4 7"><path d="M0.5,2.5L2,1L3.5,2.5M0.5,4.5L2,6L3.5,4.5" fill="none" stroke="#777" stroke-width="0.6"/></svg>
<div class="a" style="left:983px;top:290.8px;width:24px;height:8px;background:#4e4e4e;"></div>
<div class="t" style="left:990.5px;top:291.03px;font-size:5.8px;line-height:7.54px;color:#7c7c7c;">100%</div>
<svg class="a" style="left:984px;top:291px" width="4" height="7" viewBox="0 0 4 7"><path d="M0.5,2.5L2,1L3.5,2.5M0.5,4.5L2,6L3.5,4.5" fill="none" stroke="#777" stroke-width="0.6"/></svg>
<svg class="a" style="left:1010.5px;top:291px" width="7" height="7" viewBox="0 0 7 7"><path d="M1,1H6M3.5,1V6M1.5,6H5.5" fill="none" stroke="#888" stroke-width="0.6"/><circle cx="3.5" cy="3.5" r="1.5" fill="none" stroke="#888" stroke-width="0.5"/></svg>
<svg class="a" style="left:931px;top:301.66px;overflow:visible" width="23" height="9.28"><text x="0" y="6.73" font-size="5.8" textLength="23" lengthAdjust="spacingAndGlyphs" fill="#7c7c7c" font-family="Liberation Sans">先端位置：</text></svg>
<div class="a" style="left:956px;top:302.3px;width:8px;height:8px;border:1px solid #5e5e5e;border-width:0.5px"></div>
<div class="a" style="left:964px;top:302.3px;width:8px;height:8px;border:1px solid #5e5e5e;border-width:0.5px"></div>
<svg class="a" style="left:957.5px;top:304px" width="5" height="5" viewBox="0 0 5 5"><path d="M0.5,4.5H4.5M1.5,1V4.5M3,2V4.5" stroke="#888" stroke-width="0.6"/></svg>
<svg class="a" style="left:965.5px;top:304px" width="5" height="5" viewBox="0 0 5 5"><path d="M0.5,4.5H4.5M1,2H4" stroke="#888" stroke-width="0.6"/></svg>
<div class="a" style="left:921px;top:313px;width:97px;height:0.5px;background:#5d5d5d;"></div>
<svg class="a" style="left:922px;top:315.56px;overflow:visible" width="32" height="9.28"><text x="0" y="6.73" font-size="5.8" textLength="32" lengthAdjust="spacingAndGlyphs" fill="#7c7c7c" font-family="Liberation Sans">プロファイル：</text></svg>
<div class="a" style="left:955px;top:316.3px;width:35px;height:8.2px;background:#7a7a7a;"></div>
<div class="a" style="left:990px;top:316.3px;width:6px;height:8.2px;background:#4e4e4e;"></div>
<svg class="a" style="left:990.5px;top:319.2px" width="5" height="3" viewBox="0 0 5 3"><path d="M0.6,0.6L2.5,2.4L4.4,0.6" fill="none" stroke="#777" stroke-width="0.8"/></svg>
<svg class="a" style="left:999.5px;top:317.5px" width="6" height="6" viewBox="0 0 6 6"><path d="M0.5,3H3M5.5,0.5V5.5M3,1.5L1,3L3,4.5" fill="none" stroke="#888" stroke-width="0.6"/></svg>
<svg class="a" style="left:1010.5px;top:316.5px" width="6" height="8" viewBox="0 0 6 8"><path d="M3,0.5V7.5M0.5,3H5.5M0.5,5H5.5" fill="none" stroke="#888" stroke-width="0.6"/></svg>
<div class="a" style="left:919.7px;top:328px;width:100.9px;height:10.4px;background:#434343;"></div>
<div class="a" style="left:919.7px;top:328.6px;width:18px;height:9.8px;background:#535353;"></div>
<svg class="a" style="left:921.2px;top:331.0px" width="3" height="4.4" viewBox="0 0 3 4.4"><path d="M1.5,0.2L2.7,1.8H0.3Z M1.5,4.2L2.7,2.6H0.3Z" fill="#b8b8b8"/></svg>
<svg class="a" style="left:925.7px;top:328.56px;overflow:visible" width="8" height="9.28"><text x="0" y="6.73" font-size="5.8" textLength="8" lengthAdjust="spacingAndGlyphs" fill="#e0e0e0" font-family="Liberation Sans">文字</text></svg>
<svg class="a" style="left:1014.3000000000001px;top:331.2px" width="4" height="4" viewBox="0 0 4 4"><g fill="#9a9a9a"><rect x="0" y="0" width="4" height="0.9"/><rect x="0" y="1.55" width="4" height="0.9"/><rect x="0" y="3.1" width="4" height="0.9"/></g></svg>
<div class="a" style="left:922px;top:342.4px;width:96px;height:6.3px;background:#454545;"></div>
<svg class="a" style="left:923.5px;top:341.12px;overflow:visible" width="39" height="8.96"><text x="0" y="6.50" font-size="5.6" textLength="39" lengthAdjust="spacingAndGlyphs" fill="#e0e0e0" font-family="Liberation Sans">小塚ゴシック Pr6N</text></svg>
<svg class="a" style="left:1010.5px;top:344.2px" width="5" height="3" viewBox="0 0 5 3"><path d="M0.6,0.6L2.5,2.4L4.4,0.6" fill="none" stroke="#d0d0d0" stroke-width="0.8"/></svg>
<div class="a" style="left:922px;top:352.6px;width:96px;height:6.4px;background:#454545;"></div>
<div class="t" style="left:923.5px;top:352.16px;font-size:5.6px;line-height:7.28px;color:#e0e0e0;">R</div>
<svg class="a" style="left:1012px;top:354.3px" width="5" height="3" viewBox="0 0 5 3"><path d="M0.6,0.6L2.5,2.4L4.4,0.6" fill="none" stroke="#d0d0d0" stroke-width="0.8"/></svg>
<svg class="a" style="left:921.5px;top:365.3px" width="8" height="7" viewBox="0 0 8 7"><path d="M0.5,2H4M2.2,2V6.5M4.5,0.5H7.5M6,0.5V6.5" stroke="#d0d0d0" stroke-width="0.8"/></svg>
<svg class="a" style="left:931.5px;top:364.8px" width="5" height="8" viewBox="0 0 5 8"><path d="M0.8,2.8L2.5,1L4.2,2.8M0.8,5.2L2.5,7L4.2,5.2" fill="none" stroke="#c8c8c8" stroke-width="0.8"/></svg>
<div class="a" style="left:937px;top:365.0px;width:19.2px;height:7.6px;background:#454545;"></div>
<div class="t" style="left:938.5px;top:365.16px;font-size:5.6px;line-height:7.28px;color:#e0e0e0;">12 pt</div>
<div class="a" style="left:956.2px;top:365.0px;width:6.6px;height:7.6px;background:#4a4a4a;"></div>
<svg class="a" style="left:957px;top:367.3px" width="5" height="3" viewBox="0 0 5 3"><path d="M0.6,0.6L2.5,2.4L4.4,0.6" fill="none" stroke="#d0d0d0" stroke-width="0.8"/></svg>
<svg class="a" style="left:921.5px;top:375.8px" width="8" height="7" viewBox="0 0 8 7"><path d="M1,0.5V6.5M0.3,1.5L1,0.5L1.7,1.5M0.3,5.5L1,6.5L1.7,5.5M3,1H7.5M5.2,1V6.5" fill="none" stroke="#d0d0d0" stroke-width="0.7"/></svg>
<svg class="a" style="left:931.5px;top:375.3px" width="5" height="8" viewBox="0 0 5 8"><path d="M0.8,2.8L2.5,1L4.2,2.8M0.8,5.2L2.5,7L4.2,5.2" fill="none" stroke="#c8c8c8" stroke-width="0.8"/></svg>
<div class="a" style="left:937px;top:375.5px;width:19.2px;height:7.6px;background:#454545;"></div>
<div class="t" style="left:938.5px;top:375.66px;font-size:5.6px;line-height:7.28px;color:#e0e0e0;">100%</div>
<div class="a" style="left:956.2px;top:375.5px;width:6.6px;height:7.6px;background:#4a4a4a;"></div>
<svg class="a" style="left:957px;top:377.8px" width="5" height="3" viewBox="0 0 5 3"><path d="M0.6,0.6L2.5,2.4L4.4,0.6" fill="none" stroke="#d0d0d0" stroke-width="0.8"/></svg>
<svg class="a" style="left:921.5px;top:385.7px" width="8" height="7" viewBox="0 0 8 7"><path d="M0.5,1H3.5L0.8,6M4.5,1.5H7.5M6,1.5V6.5" fill="none" stroke="#d0d0d0" stroke-width="0.7"/></svg>
<svg class="a" style="left:931.5px;top:385.2px" width="5" height="8" viewBox="0 0 5 8"><path d="M0.8,2.8L2.5,1L4.2,2.8M0.8,5.2L2.5,7L4.2,5.2" fill="none" stroke="#c8c8c8" stroke-width="0.8"/></svg>
<div class="a" style="left:937px;top:385.4px;width:19.2px;height:7.6px;background:#454545;"></div>
<div class="t" style="left:938.5px;top:385.56px;font-size:5.6px;line-height:7.28px;color:#e0e0e0;">和文等幅</div>
<div class="a" style="left:956.2px;top:385.4px;width:6.6px;height:7.6px;background:#4a4a4a;"></div>
<svg class="a" style="left:957px;top:387.7px" width="5" height="3" viewBox="0 0 5 3"><path d="M0.6,0.6L2.5,2.4L4.4,0.6" fill="none" stroke="#d0d0d0" stroke-width="0.8"/></svg>
<svg class="a" style="left:972.5px;top:365.3px" width="8" height="7" viewBox="0 0 8 7"><path d="M0.5,6.5H7.5M4,0.5V6.5M1.5,2.5H6.5" fill="none" stroke="#d0d0d0" stroke-width="0.8"/></svg>
<svg class="a" style="left:984.5px;top:364.8px" width="5" height="8" viewBox="0 0 5 8"><path d="M0.8,2.8L2.5,1L4.2,2.8M0.8,5.2L2.5,7L4.2,5.2" fill="none" stroke="#c8c8c8" stroke-width="0.8"/></svg>
<div class="a" style="left:990.5px;top:365.0px;width:20.8px;height:7.6px;background:#454545;"></div>
<div class="t" style="left:992px;top:365.16px;font-size:5.6px;line-height:7.28px;color:#e0e0e0;">(21 pt)</div>
<div class="a" style="left:1011.3px;top:365.0px;width:6.8px;height:7.6px;background:#4a4a4a;"></div>
<svg class="a" style="left:1012.2px;top:367.3px" width="5" height="3" viewBox="0 0 5 3"><path d="M0.6,0.6L2.5,2.4L4.4,0.6" fill="none" stroke="#d0d0d0" stroke-width="0.8"/></svg>
<svg class="a" style="left:972.5px;top:375.8px" width="8" height="7" viewBox="0 0 8 7"><path d="M0.5,0.8H7.5M4,0.8V6.5M0.5,6.5L2,5M7.5,6.5L6,5" fill="none" stroke="#d0d0d0" stroke-width="0.7"/></svg>
<svg class="a" style="left:984.5px;top:375.3px" width="5" height="8" viewBox="0 0 5 8"><path d="M0.8,2.8L2.5,1L4.2,2.8M0.8,5.2L2.5,7L4.2,5.2" fill="none" stroke="#c8c8c8" stroke-width="0.8"/></svg>
<div class="a" style="left:990.5px;top:375.5px;width:20.8px;height:7.6px;background:#454545;"></div>
<div class="t" style="left:992px;top:375.66px;font-size:5.6px;line-height:7.28px;color:#e0e0e0;">100%</div>
<div class="a" style="left:1011.3px;top:375.5px;width:6.8px;height:7.6px;background:#4a4a4a;"></div>
<svg class="a" style="left:1012.2px;top:377.8px" width="5" height="3" viewBox="0 0 5 3"><path d="M0.6,0.6L2.5,2.4L4.4,0.6" fill="none" stroke="#d0d0d0" stroke-width="0.8"/></svg>
<svg class="a" style="left:972.5px;top:385.7px" width="8" height="7" viewBox="0 0 8 7"><rect x="0.5" y="0.5" width="7" height="6" fill="none" stroke="#d0d0d0" stroke-width="0.7"/><path d="M2,2H6M2,3.5H6M2,5H6" stroke="#d0d0d0" stroke-width="0.5"/></svg>
<svg class="a" style="left:984.5px;top:385.2px" width="5" height="8" viewBox="0 0 5 8"><path d="M0.8,2.8L2.5,1L4.2,2.8M0.8,5.2L2.5,7L4.2,5.2" fill="none" stroke="#c8c8c8" stroke-width="0.8"/></svg>
<div class="a" style="left:990.5px;top:385.4px;width:20.8px;height:7.6px;background:#454545;"></div>
<div class="t" style="left:992px;top:385.56px;font-size:5.6px;line-height:7.28px;color:#e0e0e0;">0</div>
<div class="a" style="left:1011.3px;top:385.4px;width:6.8px;height:7.6px;background:#4a4a4a;"></div>
<svg class="a" style="left:1012.2px;top:387.7px" width="5" height="3" viewBox="0 0 5 3"><path d="M0.6,0.6L2.5,2.4L4.4,0.6" fill="none" stroke="#d0d0d0" stroke-width="0.8"/></svg>
<div class="a" style="left:921px;top:395px;width:97px;height:0.5px;background:#5d5d5d;"></div>
<svg class="a" style="left:921px;top:397.76px;overflow:visible" width="39" height="9.28"><text x="0" y="6.73" font-size="5.8" textLength="39" lengthAdjust="spacingAndGlyphs" fill="#c8d0e0" font-family="Liberation Sans">グリフにスナップ</text></svg>
<svg class="a" style="left:995.5px;top:398.5px" width="7" height="7" viewBox="0 0 7 7"><path d="M0.5,0.5H4.5V3M0.5,0.5V4.5H3" fill="none" stroke="#d0d0d0" stroke-width="0.7"/><rect x="3" y="3.5" width="3.5" height="3" fill="none" stroke="#d0d0d0" stroke-width="0.6"/></svg>
<svg class="a" style="left:1009.5px;top:398.5px" width="8" height="8" viewBox="0 0 8 8"><circle cx="4" cy="4" r="3.2" fill="none" stroke="#d0d0d0" stroke-width="0.7"/><path d="M4,3V6M4,1.8V2.3" stroke="#d0d0d0" stroke-width="0.8"/></svg>
<div class="a" style="left:921px;top:409px;width:97px;height:0.5px;background:#5d5d5d;"></div>
<svg class="a" style="left:923px;top:412.5px" width="8" height="8" viewBox="0 0 8 8"><rect x="0.5" y="0.5" width="7" height="7" fill="none" stroke="#777" stroke-width="0.6"/><path d="M2,2H6M2,4H6M2,6H5" stroke="#777" stroke-width="0.5"/></svg>
<svg class="a" style="left:937px;top:412.5px" width="8" height="8" viewBox="0 0 8 8"><rect x="0.5" y="0.5" width="7" height="7" fill="none" stroke="#777" stroke-width="0.6"/><path d="M2,2H6M2,4H6M2,6H5" stroke="#777" stroke-width="0.5"/></svg>
<svg class="a" style="left:953px;top:412.5px" width="8" height="8" viewBox="0 0 8 8"><rect x="0.5" y="0.5" width="7" height="7" fill="none" stroke="#777" stroke-width="0.6"/><path d="M2,2H6M2,4H6M2,6H5" stroke="#777" stroke-width="0.5"/></svg>
<svg class="a" style="left:970px;top:412.5px" width="8" height="8" viewBox="0 0 8 8"><rect x="0.5" y="0.5" width="7" height="7" fill="none" stroke="#777" stroke-width="0.6"/><path d="M2,2H6M2,4H6M2,6H5" stroke="#777" stroke-width="0.5"/></svg>
<svg class="a" style="left:994px;top:412.5px" width="8" height="8" viewBox="0 0 8 8"><rect x="0.5" y="0.5" width="7" height="7" fill="none" stroke="#777" stroke-width="0.6"/><path d="M2,2H6M2,4H6M2,6H5" stroke="#777" stroke-width="0.5"/></svg>
<svg class="a" style="left:1009px;top:412.5px" width="8" height="8" viewBox="0 0 8 8"><rect x="0.5" y="0.5" width="7" height="7" fill="none" stroke="#777" stroke-width="0.6"/><path d="M2,2H6M2,4H6M2,6H5" stroke="#777" stroke-width="0.5"/></svg>
<div class="a" style="left:986px;top:412px;width:0.5px;height:9px;background:#5d5d5d;"></div>
<div class="a" style="left:919.7px;top:426.2px;width:100.9px;height:9.8px;background:#434343;"></div>
<div class="a" style="left:919.7px;top:426.8px;width:18.3px;height:9.200000000000001px;background:#535353;"></div>
<svg class="a" style="left:921.2px;top:428.9px" width="3" height="4.4" viewBox="0 0 3 4.4"><path d="M1.5,0.2L2.7,1.8H0.3Z M1.5,4.2L2.7,2.6H0.3Z" fill="#b8b8b8"/></svg>
<svg class="a" style="left:925.7px;top:426.46px;overflow:visible" width="8" height="9.28"><text x="0" y="6.73" font-size="5.8" textLength="8" lengthAdjust="spacingAndGlyphs" fill="#e0e0e0" font-family="Liberation Sans">段落</text></svg>
<svg class="a" style="left:1014.3000000000001px;top:429.09999999999997px" width="4" height="4" viewBox="0 0 4 4"><g fill="#9a9a9a"><rect x="0" y="0" width="4" height="0.9"/><rect x="0" y="1.55" width="4" height="0.9"/><rect x="0" y="3.1" width="4" height="0.9"/></g></svg>
<div class="a" style="left:923px;top:439.5px;width:9px;height:9px;background:#393939;"></div>
<svg class="a" style="left:923.5px;top:440px" width="7" height="8" viewBox="0 0 7 8"><path d="M0.5,1H6.5M0.5,3H5M0.5,5H6.5M0.5,7H4.5" stroke="#d8d8d8" stroke-width="0.9"/></svg>
<svg class="a" style="left:936.5px;top:440px" width="7" height="8" viewBox="0 0 7 8"><path d="M0.5,1H6.5M1.2,3H5.8M0.5,5H6.5M1.5,7H5.5" stroke="#c8c8c8" stroke-width="0.9"/></svg>
<svg class="a" style="left:951.5px;top:440px" width="7" height="8" viewBox="0 0 7 8"><path d="M0.5,1H6.5M1.2,3H5.8M0.5,5H6.5M1.5,7H5.5" stroke="#c8c8c8" stroke-width="0.9"/></svg>
<svg class="a" style="left:965.5px;top:440px" width="7" height="8" viewBox="0 0 7 8"><path d="M0.5,1H6.5M1.2,3H5.8M0.5,5H6.5M1.5,7H5.5" stroke="#c8c8c8" stroke-width="0.9"/></svg>
<svg class="a" style="left:979.5px;top:440px" width="7" height="8" viewBox="0 0 7 8"><path d="M0.5,1H6.5M1.2,3H5.8M0.5,5H6.5M1.5,7H5.5" stroke="#c8c8c8" stroke-width="0.9"/></svg>
<svg class="a" style="left:993.5px;top:440px" width="7" height="8" viewBox="0 0 7 8"><path d="M0.5,1H6.5M1.2,3H5.8M0.5,5H6.5M1.5,7H5.5" stroke="#c8c8c8" stroke-width="0.9"/></svg>
<svg class="a" style="left:1008.5px;top:440px" width="7" height="8" viewBox="0 0 7 8"><path d="M0.5,1H6.5M1.2,3H5.8M0.5,5H6.5M1.5,7H5.5" stroke="#c8c8c8" stroke-width="0.9"/></svg>
<svg class="a" style="left:922.5px;top:455px" width="7" height="8" viewBox="0 0 7 8"><path d="M2.5,1H6.5M2.5,4H6.5M2.5,7H6.5" stroke="#d0d0d0" stroke-width="0.8"/><g fill="#d0d0d0"><rect x="0.3" y="0.4" width="1.2" height="1.2"/><rect x="0.3" y="3.4" width="1.2" height="1.2"/><rect x="0.3" y="6.4" width="1.2" height="1.2"/></g></svg>
<svg class="a" style="left:931px;top:457.8px" width="5" height="3" viewBox="0 0 5 3"><path d="M0.6,0.6L2.5,2.4L4.4,0.6" fill="none" stroke="#d0d0d0" stroke-width="0.8"/></svg>
<svg class="a" style="left:937.5px;top:455px" width="7" height="8" viewBox="0 0 7 8"><path d="M2.5,1H6.5M2.5,4H6.5M2.5,7H6.5M0.5,0.5V2M0.5,3.2V4.7M0.5,6V7.5" stroke="#d0d0d0" stroke-width="0.8"/></svg>
<svg class="a" style="left:946px;top:457.8px" width="5" height="3" viewBox="0 0 5 3"><path d="M0.6,0.6L2.5,2.4L4.4,0.6" fill="none" stroke="#d0d0d0" stroke-width="0.8"/></svg>
<svg class="a" style="left:921px;top:469.4px" width="8" height="7" viewBox="0 0 8 7"><path d="M3,0.5H7.5M3,2.5H7.5M3,4.5H7.5M3,6.5H7.5M0.5,2L2,3.5L0.5,5" fill="none" stroke="#cfcfcf" stroke-width="0.6"/></svg>
<svg class="a" style="left:930.5px;top:468.9px" width="5" height="8" viewBox="0 0 5 8"><path d="M0.8,2.8L2.5,1L4.2,2.8M0.8,5.2L2.5,7L4.2,5.2" fill="none" stroke="#c8c8c8" stroke-width="0.8"/></svg>
<div class="a" style="left:937px;top:469.09999999999997px;width:29px;height:7.6px;background:#454545;"></div>
<div class="t" style="left:938.5px;top:469.26px;font-size:5.6px;line-height:7.28px;color:#e0e0e0;">0 pt</div>
<svg class="a" style="left:972.5px;top:469.4px" width="8" height="7" viewBox="0 0 8 7"><path d="M3,0.5H7.5M3,2.5H7.5M3,4.5H7.5M3,6.5H7.5M0.5,2L2,3.5L0.5,5" fill="none" stroke="#cfcfcf" stroke-width="0.6"/></svg>
<svg class="a" style="left:982.0px;top:468.9px" width="5" height="8" viewBox="0 0 5 8"><path d="M0.8,2.8L2.5,1L4.2,2.8M0.8,5.2L2.5,7L4.2,5.2" fill="none" stroke="#c8c8c8" stroke-width="0.8"/></svg>
<div class="a" style="left:988.5px;top:469.09999999999997px;width:29.5px;height:7.6px;background:#454545;"></div>
<div class="t" style="left:990.0px;top:469.26px;font-size:5.6px;line-height:7.28px;color:#e0e0e0;">0 pt</div>
<svg class="a" style="left:921px;top:480.5px" width="8" height="7" viewBox="0 0 8 7"><path d="M3,0.5H7.5M3,2.5H7.5M3,4.5H7.5M3,6.5H7.5M0.5,2L2,3.5L0.5,5" fill="none" stroke="#cfcfcf" stroke-width="0.6"/></svg>
<svg class="a" style="left:930.5px;top:480px" width="5" height="8" viewBox="0 0 5 8"><path d="M0.8,2.8L2.5,1L4.2,2.8M0.8,5.2L2.5,7L4.2,5.2" fill="none" stroke="#c8c8c8" stroke-width="0.8"/></svg>
<div class="a" style="left:937px;top:480.2px;width:29px;height:7.6px;background:#454545;"></div>
<div class="t" style="left:938.5px;top:480.36px;font-size:5.6px;line-height:7.28px;color:#e0e0e0;">0 pt</div>
<svg class="a" style="left:921px;top:493.3px" width="8" height="7" viewBox="0 0 8 7"><path d="M3,0.5H7.5M3,2.5H7.5M3,4.5H7.5M3,6.5H7.5M0.5,2L2,3.5L0.5,5" fill="none" stroke="#cfcfcf" stroke-width="0.6"/></svg>
<svg class="a" style="left:930.5px;top:492.8px" width="5" height="8" viewBox="0 0 5 8"><path d="M0.8,2.8L2.5,1L4.2,2.8M0.8,5.2L2.5,7L4.2,5.2" fill="none" stroke="#c8c8c8" stroke-width="0.8"/></svg>
<div class="a" style="left:937px;top:493.0px;width:29px;height:7.6px;background:#454545;"></div>
<div class="t" style="left:938.5px;top:493.16px;font-size:5.6px;line-height:7.28px;color:#e0e0e0;">0 pt</div>
<svg class="a" style="left:972.5px;top:493.3px" width="8" height="7" viewBox="0 0 8 7"><path d="M3,0.5H7.5M3,2.5H7.5M3,4.5H7.5M3,6.5H7.5M0.5,2L2,3.5L0.5,5" fill="none" stroke="#cfcfcf" stroke-width="0.6"/></svg>
<svg class="a" style="left:982.0px;top:492.8px" width="5" height="8" viewBox="0 0 5 8"><path d="M0.8,2.8L2.5,1L4.2,2.8M0.8,5.2L2.5,7L4.2,5.2" fill="none" stroke="#c8c8c8" stroke-width="0.8"/></svg>
<div class="a" style="left:988.5px;top:493.0px;width:29.5px;height:7.6px;background:#454545;"></div>
<div class="t" style="left:990.0px;top:493.16px;font-size:5.6px;line-height:7.28px;color:#e0e0e0;">0 pt</div>
<div class="a" style="left:921px;top:503px;width:97px;height:0.5px;background:#5d5d5d;"></div>
<svg class="a" style="left:921px;top:505.66px;overflow:visible" width="23" height="9.28"><text x="0" y="6.73" font-size="5.8" textLength="23" lengthAdjust="spacingAndGlyphs" fill="#c8d0e0" font-family="Liberation Sans">禁則処理：</text></svg>
<div class="a" style="left:946px;top:506.7px;width:71.7px;height:6.9px;background:#454545;"></div>
<svg class="a" style="left:948px;top:505.66px;overflow:visible" width="18" height="9.28"><text x="0" y="6.73" font-size="5.8" textLength="18" lengthAdjust="spacingAndGlyphs" fill="#e0e0e0" font-family="Liberation Sans">強い禁則</text></svg>
<svg class="a" style="left:1012px;top:509px" width="5" height="3" viewBox="0 0 5 3"><path d="M0.6,0.6L2.5,2.4L4.4,0.6" fill="none" stroke="#d0d0d0" stroke-width="0.8"/></svg>
<svg class="a" style="left:921px;top:516.66px;overflow:visible" width="23" height="9.28"><text x="0" y="6.73" font-size="5.8" textLength="23" lengthAdjust="spacingAndGlyphs" fill="#c8d0e0" font-family="Liberation Sans">文字組み：</text></svg>
<div class="a" style="left:946px;top:517.9px;width:71.7px;height:6.9px;background:#454545;"></div>
<svg class="a" style="left:948px;top:516.66px;overflow:visible" width="29" height="9.28"><text x="0" y="6.73" font-size="5.8" textLength="29" lengthAdjust="spacingAndGlyphs" fill="#e0e0e0" font-family="Liberation Sans">行末約物半角</text></svg>
<svg class="a" style="left:1012px;top:520px" width="5" height="3" viewBox="0 0 5 3"><path d="M0.6,0.6L2.5,2.4L4.4,0.6" fill="none" stroke="#d0d0d0" stroke-width="0.8"/></svg>
<div class="a" style="left:921px;top:528.5px;width:97px;height:0.5px;background:#5d5d5d;"></div>
<div class="a" style="left:922px;top:531.5px;width:4.5px;height:4.5px;border:1px solid #cfcfcf;border-width:0.6px"></div>
<svg class="a" style="left:929px;top:529.06px;overflow:visible" width="36" height="9.28"><text x="0" y="6.73" font-size="5.8" textLength="36" lengthAdjust="spacingAndGlyphs" fill="#d8e0f0" font-family="Liberation Sans">ハイフネーション</text></svg>
<div class="a" style="left:921px;top:538.1px;width:97px;height:0.5px;background:#5d5d5d;"></div>
</body></html>
